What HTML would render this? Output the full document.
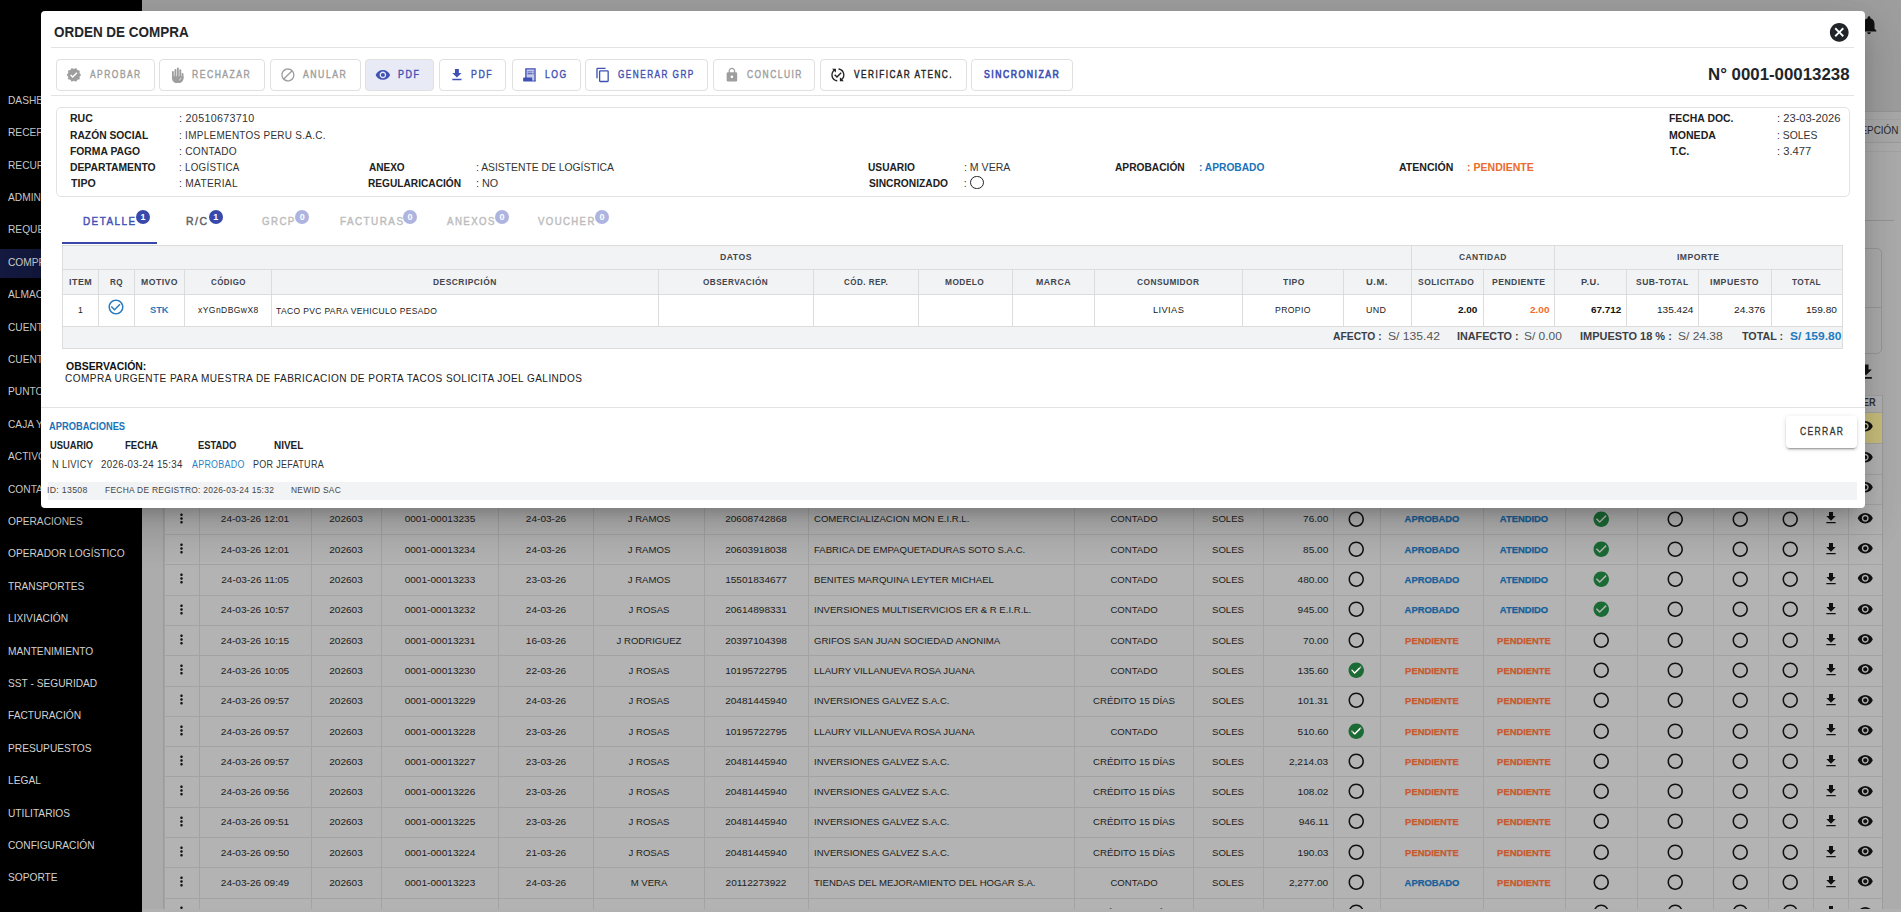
<!DOCTYPE html>
<html><head><meta charset="utf-8"><title>Orden de compra</title>
<style>
html,body{margin:0;padding:0;width:1901px;height:912px;overflow:hidden;background:#000;font-family:"Liberation Sans", sans-serif;}
.t{position:absolute;white-space:nowrap;line-height:1;font-family:"Liberation Sans", sans-serif;}
.r{position:absolute;}
</style></head><body>
<div class="r" style="left:0px;top:0px;width:142px;height:912px;background:#000;"></div><div class="r" style="left:142px;top:0px;width:1759px;height:912px;background:#acacac;"></div><div class="r" style="left:142px;top:0px;width:1759px;height:111px;background:#9e9e9e;"></div><div class="r" style="left:142px;top:111px;width:1759px;height:32px;background:#a9a9a9;border-top:1px solid #969696;border-bottom:1px solid #9c9c9c;box-sizing:border-box;"></div><div class="r" style="left:142px;top:119px;width:1759px;height:1px;background:#a2a2a2;"></div><div class="r" style="left:142px;top:151px;width:1759px;height:1px;background:#a3a3a3;"></div><div class="t" style="right:3.00px;top:124.69px;font-size:11px;font-weight:400;color:#2a2a2a;transform:scaleX(0.9000);transform-origin:right 50%;">RECEPCIÓN</div><svg class="r" style="left:1858.00px;top:14.00px;width:22px;height:22px;" viewBox="0 0 24 24"><path fill="#111" d="M12 22c1.1 0 2-.9 2-2h-4c0 1.1.89 2 2 2zm6-6v-5c0-3.07-1.64-5.64-4.5-6.32V4c0-.83-.67-1.5-1.5-1.5s-1.5.67-1.5 1.5v.68C7.63 5.36 6 7.92 6 11v5l-2 2v1h16v-1l-2-2z"/></svg><div class="r" style="left:1640px;top:220px;width:254px;height:1px;background:#959595;"></div><div class="r" style="left:1600px;top:248px;width:282px;height:106px;background:#acacac;border:1px solid #989898;border-radius:5px;box-sizing:border-box;"></div><div class="r" style="left:1600px;top:307px;width:282px;height:1px;background:#989898;"></div><svg class="r" style="left:1856.00px;top:362.00px;width:20px;height:20px;" viewBox="0 0 24 24"><path fill="#111" d="M19 9h-4V3H9v6H5l7 7 7-7zM5 18v2h14v-2H5z"/></svg><div class="r" style="left:0px;top:249px;width:142px;height:29px;background:#141a40;"></div><div class="t" style="left:8.00px;top:94.71px;font-size:10.5px;font-weight:400;color:#d2d2d2;transform:scaleX(0.9700);transform-origin:left 50%;">DASHBOARD</div><div class="t" style="left:8.00px;top:127.11px;font-size:10.5px;font-weight:400;color:#d2d2d2;transform:scaleX(0.9700);transform-origin:left 50%;">RECEPCIÓN</div><div class="t" style="left:8.00px;top:159.51px;font-size:10.5px;font-weight:400;color:#d2d2d2;transform:scaleX(0.9700);transform-origin:left 50%;">RECURSOS HUMANOS</div><div class="t" style="left:8.00px;top:191.91px;font-size:10.5px;font-weight:400;color:#d2d2d2;transform:scaleX(0.9700);transform-origin:left 50%;">ADMINISTRACIÓN</div><div class="t" style="left:8.00px;top:224.31px;font-size:10.5px;font-weight:400;color:#d2d2d2;transform:scaleX(0.9700);transform-origin:left 50%;">REQUERIMIENTOS</div><div class="t" style="left:8.00px;top:256.71px;font-size:10.5px;font-weight:400;color:#d2d2d2;transform:scaleX(0.9700);transform-origin:left 50%;">COMPRAS</div><div class="t" style="left:8.00px;top:289.11px;font-size:10.5px;font-weight:400;color:#d2d2d2;transform:scaleX(0.9700);transform-origin:left 50%;">ALMACÉN</div><div class="t" style="left:8.00px;top:321.51px;font-size:10.5px;font-weight:400;color:#d2d2d2;transform:scaleX(0.9700);transform-origin:left 50%;">CUENTAS POR PAGAR</div><div class="t" style="left:8.00px;top:353.91px;font-size:10.5px;font-weight:400;color:#d2d2d2;transform:scaleX(0.9700);transform-origin:left 50%;">CUENTAS POR COBRAR</div><div class="t" style="left:8.00px;top:386.31px;font-size:10.5px;font-weight:400;color:#d2d2d2;transform:scaleX(0.9700);transform-origin:left 50%;">PUNTO DE VENTA</div><div class="t" style="left:8.00px;top:418.71px;font-size:10.5px;font-weight:400;color:#d2d2d2;transform:scaleX(0.9700);transform-origin:left 50%;">CAJA Y BANCOS</div><div class="t" style="left:8.00px;top:451.11px;font-size:10.5px;font-weight:400;color:#d2d2d2;transform:scaleX(0.9700);transform-origin:left 50%;">ACTIVOS</div><div class="t" style="left:8.00px;top:483.51px;font-size:10.5px;font-weight:400;color:#d2d2d2;transform:scaleX(0.9700);transform-origin:left 50%;">CONTABILIDAD</div><div class="t" style="left:8.00px;top:515.91px;font-size:10.5px;font-weight:400;color:#d2d2d2;transform:scaleX(0.9700);transform-origin:left 50%;">OPERACIONES</div><div class="t" style="left:8.00px;top:548.31px;font-size:10.5px;font-weight:400;color:#d2d2d2;transform:scaleX(0.9700);transform-origin:left 50%;">OPERADOR LOGÍSTICO</div><div class="t" style="left:8.00px;top:580.71px;font-size:10.5px;font-weight:400;color:#d2d2d2;transform:scaleX(0.9700);transform-origin:left 50%;">TRANSPORTES</div><div class="t" style="left:8.00px;top:613.11px;font-size:10.5px;font-weight:400;color:#d2d2d2;transform:scaleX(0.9700);transform-origin:left 50%;">LIXIVIACIÓN</div><div class="t" style="left:8.00px;top:645.51px;font-size:10.5px;font-weight:400;color:#d2d2d2;transform:scaleX(0.9700);transform-origin:left 50%;">MANTENIMIENTO</div><div class="t" style="left:8.00px;top:677.91px;font-size:10.5px;font-weight:400;color:#d2d2d2;transform:scaleX(0.9700);transform-origin:left 50%;">SST - SEGURIDAD</div><div class="t" style="left:8.00px;top:710.31px;font-size:10.5px;font-weight:400;color:#d2d2d2;transform:scaleX(0.9700);transform-origin:left 50%;">FACTURACIÓN</div><div class="t" style="left:8.00px;top:742.71px;font-size:10.5px;font-weight:400;color:#d2d2d2;transform:scaleX(0.9700);transform-origin:left 50%;">PRESUPUESTOS</div><div class="t" style="left:8.00px;top:775.11px;font-size:10.5px;font-weight:400;color:#d2d2d2;transform:scaleX(0.9700);transform-origin:left 50%;">LEGAL</div><div class="t" style="left:8.00px;top:807.51px;font-size:10.5px;font-weight:400;color:#d2d2d2;transform:scaleX(0.9700);transform-origin:left 50%;">UTILITARIOS</div><div class="t" style="left:8.00px;top:839.91px;font-size:10.5px;font-weight:400;color:#d2d2d2;transform:scaleX(0.9700);transform-origin:left 50%;">CONFIGURACIÓN</div><div class="t" style="left:8.00px;top:872.31px;font-size:10.5px;font-weight:400;color:#d2d2d2;transform:scaleX(0.9700);transform-origin:left 50%;">SOPORTE</div><div class="r" style="left:164px;top:395px;width:1718px;height:514px;background:#b3b3b3;"></div><div class="r" style="left:164px;top:395px;width:1718px;height:17px;background:#b2b2b2;"></div><div class="r" style="left:164px;top:412px;width:1718px;height:31px;background:#c9bf7d;"></div><div class="r" style="left:164px;top:395.00px;width:1718px;height:1px;background:#a3a3a3"></div><div class="r" style="left:164px;top:412.00px;width:1718px;height:1px;background:#a3a3a3"></div><div class="r" style="left:164px;top:443.29px;width:1718px;height:1px;background:#a3a3a3"></div><div class="r" style="left:164px;top:473.58px;width:1718px;height:1px;background:#a3a3a3"></div><div class="r" style="left:164px;top:503.87px;width:1718px;height:1px;background:#a3a3a3"></div><div class="r" style="left:164px;top:534.16px;width:1718px;height:1px;background:#a3a3a3"></div><div class="r" style="left:164px;top:564.45px;width:1718px;height:1px;background:#a3a3a3"></div><div class="r" style="left:164px;top:594.74px;width:1718px;height:1px;background:#a3a3a3"></div><div class="r" style="left:164px;top:625.03px;width:1718px;height:1px;background:#a3a3a3"></div><div class="r" style="left:164px;top:655.32px;width:1718px;height:1px;background:#a3a3a3"></div><div class="r" style="left:164px;top:685.61px;width:1718px;height:1px;background:#a3a3a3"></div><div class="r" style="left:164px;top:715.90px;width:1718px;height:1px;background:#a3a3a3"></div><div class="r" style="left:164px;top:746.19px;width:1718px;height:1px;background:#a3a3a3"></div><div class="r" style="left:164px;top:776.48px;width:1718px;height:1px;background:#a3a3a3"></div><div class="r" style="left:164px;top:806.77px;width:1718px;height:1px;background:#a3a3a3"></div><div class="r" style="left:164px;top:837.06px;width:1718px;height:1px;background:#a3a3a3"></div><div class="r" style="left:164px;top:867.35px;width:1718px;height:1px;background:#a3a3a3"></div><div class="r" style="left:164px;top:897.64px;width:1718px;height:1px;background:#a3a3a3"></div><div class="r" style="left:164px;top:395px;width:1px;height:514px;background:#a3a3a3;"></div><div class="r" style="left:199px;top:395px;width:1px;height:514px;background:#a3a3a3;"></div><div class="r" style="left:311px;top:395px;width:1px;height:514px;background:#a3a3a3;"></div><div class="r" style="left:381px;top:395px;width:1px;height:514px;background:#a3a3a3;"></div><div class="r" style="left:498px;top:395px;width:1px;height:514px;background:#a3a3a3;"></div><div class="r" style="left:593px;top:395px;width:1px;height:514px;background:#a3a3a3;"></div><div class="r" style="left:704px;top:395px;width:1px;height:514px;background:#a3a3a3;"></div><div class="r" style="left:808px;top:395px;width:1px;height:514px;background:#a3a3a3;"></div><div class="r" style="left:1074px;top:395px;width:1px;height:514px;background:#a3a3a3;"></div><div class="r" style="left:1193px;top:395px;width:1px;height:514px;background:#a3a3a3;"></div><div class="r" style="left:1263px;top:395px;width:1px;height:514px;background:#a3a3a3;"></div><div class="r" style="left:1333px;top:395px;width:1px;height:514px;background:#a3a3a3;"></div><div class="r" style="left:1380px;top:395px;width:1px;height:514px;background:#a3a3a3;"></div><div class="r" style="left:1483px;top:395px;width:1px;height:514px;background:#a3a3a3;"></div><div class="r" style="left:1565px;top:395px;width:1px;height:514px;background:#a3a3a3;"></div><div class="r" style="left:1637px;top:395px;width:1px;height:514px;background:#a3a3a3;"></div><div class="r" style="left:1713px;top:395px;width:1px;height:514px;background:#a3a3a3;"></div><div class="r" style="left:1768px;top:395px;width:1px;height:514px;background:#a3a3a3;"></div><div class="r" style="left:1813px;top:395px;width:1px;height:514px;background:#a3a3a3;"></div><div class="r" style="left:1848px;top:395px;width:1px;height:514px;background:#a3a3a3;"></div><div class="r" style="left:1882px;top:395px;width:1px;height:514px;background:#a3a3a3;"></div><div class="r" style="left:163px;top:395px;width:1px;height:514px;background:#9c9c9c;"></div><div class="r" style="left:1882px;top:395px;width:1px;height:514px;background:#9c9c9c;"></div><div class="t" style="right:25.00px;top:398.34px;font-size:10px;font-weight:700;color:#333;transform:scaleX(0.9200);transform-origin:right 50%;">VER</div><svg class="r" style="left:1857.25px;top:418.35px;width:16.5px;height:16.5px;" viewBox="0 0 24 24"><path fill="#111" d="M12 4.5C7 4.5 2.73 7.61 1 12c1.73 4.39 6 7.5 11 7.5s9.27-3.11 11-7.5c-1.73-4.39-6-7.5-11-7.5zM12 17c-2.76 0-5-2.24-5-5s2.24-5 5-5 5 2.24 5 5-2.24 5-5 5zm0-8c-1.66 0-3 1.34-3 3s1.34 3 3 3 3-1.34 3-3-1.34-3-3-3z"/></svg><svg class="r" style="left:1857.25px;top:448.64px;width:16.5px;height:16.5px;" viewBox="0 0 24 24"><path fill="#111" d="M12 4.5C7 4.5 2.73 7.61 1 12c1.73 4.39 6 7.5 11 7.5s9.27-3.11 11-7.5c-1.73-4.39-6-7.5-11-7.5zM12 17c-2.76 0-5-2.24-5-5s2.24-5 5-5 5 2.24 5 5-2.24 5-5 5zm0-8c-1.66 0-3 1.34-3 3s1.34 3 3 3 3-1.34 3-3-1.34-3-3-3z"/></svg><svg class="r" style="left:1857.25px;top:478.93px;width:16.5px;height:16.5px;" viewBox="0 0 24 24"><path fill="#111" d="M12 4.5C7 4.5 2.73 7.61 1 12c1.73 4.39 6 7.5 11 7.5s9.27-3.11 11-7.5c-1.73-4.39-6-7.5-11-7.5zM12 17c-2.76 0-5-2.24-5-5s2.24-5 5-5 5 2.24 5 5-2.24 5-5 5zm0-8c-1.66 0-3 1.34-3 3s1.34 3 3 3 3-1.34 3-3-1.34-3-3-3z"/></svg><svg class="r" style="left:173.50px;top:510.64px;width:15px;height:15px;" viewBox="0 0 24 24"><path fill="#111" d="M12 8c1.1 0 2-.9 2-2s-.9-2-2-2-2 .9-2 2 .9 2 2 2zm0 2c-1.1 0-2 .9-2 2s.9 2 2 2 2-.9 2-2-.9-2-2-2zm0 6c-1.1 0-2 .9-2 2s.9 2 2 2 2-.9 2-2-.9-2-2-2z"/></svg><div class="t" style="left:255.00px;top:515.27px;font-size:9.3px;font-weight:400;color:#1c1c1c;transform:translateX(-50%) scaleX(1.0850);transform-origin:center 50%;">24-03-26 12:01</div><div class="t" style="left:346.00px;top:515.27px;font-size:9.3px;font-weight:400;color:#1c1c1c;transform:translateX(-50%) scaleX(1.0850);transform-origin:center 50%;">202603</div><div class="t" style="left:439.50px;top:515.27px;font-size:9.3px;font-weight:400;color:#1c1c1c;transform:translateX(-50%) scaleX(1.0850);transform-origin:center 50%;">0001-00013235</div><div class="t" style="left:545.50px;top:515.27px;font-size:9.3px;font-weight:400;color:#1c1c1c;transform:translateX(-50%) scaleX(1.0850);transform-origin:center 50%;">24-03-26</div><div class="t" style="left:648.50px;top:515.27px;font-size:9.3px;font-weight:400;color:#1c1c1c;transform:translateX(-50%) scaleX(1.0300);transform-origin:center 50%;">J RAMOS</div><div class="t" style="left:756.00px;top:515.27px;font-size:9.3px;font-weight:400;color:#1c1c1c;transform:translateX(-50%) scaleX(1.0850);transform-origin:center 50%;">20608742868</div><div class="t" style="left:813.70px;top:515.27px;font-size:9.3px;font-weight:400;color:#1c1c1c;transform:scaleX(1.0300);transform-origin:left 50%;">COMERCIALIZACION MON E.I.R.L.</div><div class="t" style="left:1133.50px;top:515.27px;font-size:9.3px;font-weight:400;color:#1c1c1c;transform:translateX(-50%) scaleX(1.0300);transform-origin:center 50%;">CONTADO</div><div class="t" style="left:1228.00px;top:515.27px;font-size:9.3px;font-weight:400;color:#1c1c1c;transform:translateX(-50%) scaleX(1.0300);transform-origin:center 50%;">SOLES</div><div class="t" style="right:572.50px;top:515.27px;font-size:9.3px;font-weight:400;color:#1c1c1c;transform:scaleX(1.0850);transform-origin:right 50%;">76.00</div><svg class="r" style="left:1347.25px;top:509.60px;width:18.5px;height:18.5px;" viewBox="0 0 24 24"><path fill="#111" d="M12 2C6.48 2 2 6.48 2 12s4.48 10 10 10 10-4.48 10-10S17.52 2 12 2zm0 18c-4.42 0-8-3.58-8-8s3.58-8 8-8 8 3.58 8 8-3.58 8-8 8z"/></svg><div class="t" style="left:1431.50px;top:515.27px;font-size:9.3px;font-weight:700;color:#17609a;transform:translateX(-50%) scaleX(1.0100);transform-origin:center 50%;-webkit-text-stroke:0.25px #17609a;">APROBADO</div><div class="t" style="left:1524.00px;top:515.27px;font-size:9.3px;font-weight:700;color:#17609a;transform:translateX(-50%) scaleX(1.0100);transform-origin:center 50%;-webkit-text-stroke:0.25px #17609a;">ATENDIDO</div><svg class="r" style="left:1591.75px;top:509.60px;width:18.5px;height:18.5px;" viewBox="0 0 24 24"><path fill="#1b6b35" d="M12 2C6.48 2 2 6.48 2 12s4.48 10 10 10 10-4.48 10-10S17.52 2 12 2zm-2 15l-5-5 1.41-1.41L10 14.17l7.59-7.59L19 8l-9 9z"/></svg><svg class="r" style="left:1665.75px;top:509.60px;width:18.5px;height:18.5px;" viewBox="0 0 24 24"><path fill="#111" d="M12 2C6.48 2 2 6.48 2 12s4.48 10 10 10 10-4.48 10-10S17.52 2 12 2zm0 18c-4.42 0-8-3.58-8-8s3.58-8 8-8 8 3.58 8 8-3.58 8-8 8z"/></svg><svg class="r" style="left:1731.25px;top:509.60px;width:18.5px;height:18.5px;" viewBox="0 0 24 24"><path fill="#111" d="M12 2C6.48 2 2 6.48 2 12s4.48 10 10 10 10-4.48 10-10S17.52 2 12 2zm0 18c-4.42 0-8-3.58-8-8s3.58-8 8-8 8 3.58 8 8-3.58 8-8 8z"/></svg><svg class="r" style="left:1781.25px;top:509.60px;width:18.5px;height:18.5px;" viewBox="0 0 24 24"><path fill="#111" d="M12 2C6.48 2 2 6.48 2 12s4.48 10 10 10 10-4.48 10-10S17.52 2 12 2zm0 18c-4.42 0-8-3.58-8-8s3.58-8 8-8 8 3.58 8 8-3.58 8-8 8z"/></svg><svg class="r" style="left:1822.50px;top:510.35px;width:16px;height:16px;" viewBox="0 0 24 24"><path fill="#111" d="M19 9h-4V3H9v6H5l7 7 7-7zM5 18v2h14v-2H5z"/></svg><svg class="r" style="left:1856.75px;top:509.89px;width:16.5px;height:16.5px;" viewBox="0 0 24 24"><path fill="#111" d="M12 4.5C7 4.5 2.73 7.61 1 12c1.73 4.39 6 7.5 11 7.5s9.27-3.11 11-7.5c-1.73-4.39-6-7.5-11-7.5zM12 17c-2.76 0-5-2.24-5-5s2.24-5 5-5 5 2.24 5 5-2.24 5-5 5zm0-8c-1.66 0-3 1.34-3 3s1.34 3 3 3 3-1.34 3-3-1.34-3-3-3z"/></svg><svg class="r" style="left:173.50px;top:540.93px;width:15px;height:15px;" viewBox="0 0 24 24"><path fill="#111" d="M12 8c1.1 0 2-.9 2-2s-.9-2-2-2-2 .9-2 2 .9 2 2 2zm0 2c-1.1 0-2 .9-2 2s.9 2 2 2 2-.9 2-2-.9-2-2-2zm0 6c-1.1 0-2 .9-2 2s.9 2 2 2 2-.9 2-2-.9-2-2-2z"/></svg><div class="t" style="left:255.00px;top:545.86px;font-size:9.3px;font-weight:400;color:#1c1c1c;transform:translateX(-50%) scaleX(1.0850);transform-origin:center 50%;">24-03-26 12:01</div><div class="t" style="left:346.00px;top:545.86px;font-size:9.3px;font-weight:400;color:#1c1c1c;transform:translateX(-50%) scaleX(1.0850);transform-origin:center 50%;">202603</div><div class="t" style="left:439.50px;top:545.86px;font-size:9.3px;font-weight:400;color:#1c1c1c;transform:translateX(-50%) scaleX(1.0850);transform-origin:center 50%;">0001-00013234</div><div class="t" style="left:545.50px;top:545.86px;font-size:9.3px;font-weight:400;color:#1c1c1c;transform:translateX(-50%) scaleX(1.0850);transform-origin:center 50%;">24-03-26</div><div class="t" style="left:648.50px;top:545.86px;font-size:9.3px;font-weight:400;color:#1c1c1c;transform:translateX(-50%) scaleX(1.0300);transform-origin:center 50%;">J RAMOS</div><div class="t" style="left:756.00px;top:545.86px;font-size:9.3px;font-weight:400;color:#1c1c1c;transform:translateX(-50%) scaleX(1.0850);transform-origin:center 50%;">20603918038</div><div class="t" style="left:813.70px;top:545.86px;font-size:9.3px;font-weight:400;color:#1c1c1c;transform:scaleX(1.0300);transform-origin:left 50%;">FABRICA DE EMPAQUETADURAS SOTO S.A.C.</div><div class="t" style="left:1133.50px;top:545.86px;font-size:9.3px;font-weight:400;color:#1c1c1c;transform:translateX(-50%) scaleX(1.0300);transform-origin:center 50%;">CONTADO</div><div class="t" style="left:1228.00px;top:545.86px;font-size:9.3px;font-weight:400;color:#1c1c1c;transform:translateX(-50%) scaleX(1.0300);transform-origin:center 50%;">SOLES</div><div class="t" style="right:572.50px;top:545.86px;font-size:9.3px;font-weight:400;color:#1c1c1c;transform:scaleX(1.0850);transform-origin:right 50%;">85.00</div><svg class="r" style="left:1347.25px;top:539.88px;width:18.5px;height:18.5px;" viewBox="0 0 24 24"><path fill="#111" d="M12 2C6.48 2 2 6.48 2 12s4.48 10 10 10 10-4.48 10-10S17.52 2 12 2zm0 18c-4.42 0-8-3.58-8-8s3.58-8 8-8 8 3.58 8 8-3.58 8-8 8z"/></svg><div class="t" style="left:1431.50px;top:545.86px;font-size:9.3px;font-weight:700;color:#17609a;transform:translateX(-50%) scaleX(1.0100);transform-origin:center 50%;-webkit-text-stroke:0.25px #17609a;">APROBADO</div><div class="t" style="left:1524.00px;top:545.86px;font-size:9.3px;font-weight:700;color:#17609a;transform:translateX(-50%) scaleX(1.0100);transform-origin:center 50%;-webkit-text-stroke:0.25px #17609a;">ATENDIDO</div><svg class="r" style="left:1591.75px;top:539.88px;width:18.5px;height:18.5px;" viewBox="0 0 24 24"><path fill="#1b6b35" d="M12 2C6.48 2 2 6.48 2 12s4.48 10 10 10 10-4.48 10-10S17.52 2 12 2zm-2 15l-5-5 1.41-1.41L10 14.17l7.59-7.59L19 8l-9 9z"/></svg><svg class="r" style="left:1665.75px;top:539.88px;width:18.5px;height:18.5px;" viewBox="0 0 24 24"><path fill="#111" d="M12 2C6.48 2 2 6.48 2 12s4.48 10 10 10 10-4.48 10-10S17.52 2 12 2zm0 18c-4.42 0-8-3.58-8-8s3.58-8 8-8 8 3.58 8 8-3.58 8-8 8z"/></svg><svg class="r" style="left:1731.25px;top:539.88px;width:18.5px;height:18.5px;" viewBox="0 0 24 24"><path fill="#111" d="M12 2C6.48 2 2 6.48 2 12s4.48 10 10 10 10-4.48 10-10S17.52 2 12 2zm0 18c-4.42 0-8-3.58-8-8s3.58-8 8-8 8 3.58 8 8-3.58 8-8 8z"/></svg><svg class="r" style="left:1781.25px;top:539.88px;width:18.5px;height:18.5px;" viewBox="0 0 24 24"><path fill="#111" d="M12 2C6.48 2 2 6.48 2 12s4.48 10 10 10 10-4.48 10-10S17.52 2 12 2zm0 18c-4.42 0-8-3.58-8-8s3.58-8 8-8 8 3.58 8 8-3.58 8-8 8z"/></svg><svg class="r" style="left:1822.50px;top:540.63px;width:16px;height:16px;" viewBox="0 0 24 24"><path fill="#111" d="M19 9h-4V3H9v6H5l7 7 7-7zM5 18v2h14v-2H5z"/></svg><svg class="r" style="left:1856.75px;top:540.18px;width:16.5px;height:16.5px;" viewBox="0 0 24 24"><path fill="#111" d="M12 4.5C7 4.5 2.73 7.61 1 12c1.73 4.39 6 7.5 11 7.5s9.27-3.11 11-7.5c-1.73-4.39-6-7.5-11-7.5zM12 17c-2.76 0-5-2.24-5-5s2.24-5 5-5 5 2.24 5 5-2.24 5-5 5zm0-8c-1.66 0-3 1.34-3 3s1.34 3 3 3 3-1.34 3-3-1.34-3-3-3z"/></svg><svg class="r" style="left:173.50px;top:571.22px;width:15px;height:15px;" viewBox="0 0 24 24"><path fill="#111" d="M12 8c1.1 0 2-.9 2-2s-.9-2-2-2-2 .9-2 2 .9 2 2 2zm0 2c-1.1 0-2 .9-2 2s.9 2 2 2 2-.9 2-2-.9-2-2-2zm0 6c-1.1 0-2 .9-2 2s.9 2 2 2 2-.9 2-2-.9-2-2-2z"/></svg><div class="t" style="left:255.00px;top:576.15px;font-size:9.3px;font-weight:400;color:#1c1c1c;transform:translateX(-50%) scaleX(1.0850);transform-origin:center 50%;">24-03-26 11:05</div><div class="t" style="left:346.00px;top:576.15px;font-size:9.3px;font-weight:400;color:#1c1c1c;transform:translateX(-50%) scaleX(1.0850);transform-origin:center 50%;">202603</div><div class="t" style="left:439.50px;top:576.15px;font-size:9.3px;font-weight:400;color:#1c1c1c;transform:translateX(-50%) scaleX(1.0850);transform-origin:center 50%;">0001-00013233</div><div class="t" style="left:545.50px;top:576.15px;font-size:9.3px;font-weight:400;color:#1c1c1c;transform:translateX(-50%) scaleX(1.0850);transform-origin:center 50%;">23-03-26</div><div class="t" style="left:648.50px;top:576.15px;font-size:9.3px;font-weight:400;color:#1c1c1c;transform:translateX(-50%) scaleX(1.0300);transform-origin:center 50%;">J RAMOS</div><div class="t" style="left:756.00px;top:576.15px;font-size:9.3px;font-weight:400;color:#1c1c1c;transform:translateX(-50%) scaleX(1.0850);transform-origin:center 50%;">15501834677</div><div class="t" style="left:813.70px;top:576.15px;font-size:9.3px;font-weight:400;color:#1c1c1c;transform:scaleX(1.0300);transform-origin:left 50%;">BENITES MARQUINA LEYTER MICHAEL</div><div class="t" style="left:1133.50px;top:576.15px;font-size:9.3px;font-weight:400;color:#1c1c1c;transform:translateX(-50%) scaleX(1.0300);transform-origin:center 50%;">CONTADO</div><div class="t" style="left:1228.00px;top:576.15px;font-size:9.3px;font-weight:400;color:#1c1c1c;transform:translateX(-50%) scaleX(1.0300);transform-origin:center 50%;">SOLES</div><div class="t" style="right:572.50px;top:576.15px;font-size:9.3px;font-weight:400;color:#1c1c1c;transform:scaleX(1.0850);transform-origin:right 50%;">480.00</div><svg class="r" style="left:1347.25px;top:570.17px;width:18.5px;height:18.5px;" viewBox="0 0 24 24"><path fill="#111" d="M12 2C6.48 2 2 6.48 2 12s4.48 10 10 10 10-4.48 10-10S17.52 2 12 2zm0 18c-4.42 0-8-3.58-8-8s3.58-8 8-8 8 3.58 8 8-3.58 8-8 8z"/></svg><div class="t" style="left:1431.50px;top:576.15px;font-size:9.3px;font-weight:700;color:#17609a;transform:translateX(-50%) scaleX(1.0100);transform-origin:center 50%;-webkit-text-stroke:0.25px #17609a;">APROBADO</div><div class="t" style="left:1524.00px;top:576.15px;font-size:9.3px;font-weight:700;color:#17609a;transform:translateX(-50%) scaleX(1.0100);transform-origin:center 50%;-webkit-text-stroke:0.25px #17609a;">ATENDIDO</div><svg class="r" style="left:1591.75px;top:570.17px;width:18.5px;height:18.5px;" viewBox="0 0 24 24"><path fill="#1b6b35" d="M12 2C6.48 2 2 6.48 2 12s4.48 10 10 10 10-4.48 10-10S17.52 2 12 2zm-2 15l-5-5 1.41-1.41L10 14.17l7.59-7.59L19 8l-9 9z"/></svg><svg class="r" style="left:1665.75px;top:570.17px;width:18.5px;height:18.5px;" viewBox="0 0 24 24"><path fill="#111" d="M12 2C6.48 2 2 6.48 2 12s4.48 10 10 10 10-4.48 10-10S17.52 2 12 2zm0 18c-4.42 0-8-3.58-8-8s3.58-8 8-8 8 3.58 8 8-3.58 8-8 8z"/></svg><svg class="r" style="left:1731.25px;top:570.17px;width:18.5px;height:18.5px;" viewBox="0 0 24 24"><path fill="#111" d="M12 2C6.48 2 2 6.48 2 12s4.48 10 10 10 10-4.48 10-10S17.52 2 12 2zm0 18c-4.42 0-8-3.58-8-8s3.58-8 8-8 8 3.58 8 8-3.58 8-8 8z"/></svg><svg class="r" style="left:1781.25px;top:570.17px;width:18.5px;height:18.5px;" viewBox="0 0 24 24"><path fill="#111" d="M12 2C6.48 2 2 6.48 2 12s4.48 10 10 10 10-4.48 10-10S17.52 2 12 2zm0 18c-4.42 0-8-3.58-8-8s3.58-8 8-8 8 3.58 8 8-3.58 8-8 8z"/></svg><svg class="r" style="left:1822.50px;top:570.92px;width:16px;height:16px;" viewBox="0 0 24 24"><path fill="#111" d="M19 9h-4V3H9v6H5l7 7 7-7zM5 18v2h14v-2H5z"/></svg><svg class="r" style="left:1856.75px;top:570.47px;width:16.5px;height:16.5px;" viewBox="0 0 24 24"><path fill="#111" d="M12 4.5C7 4.5 2.73 7.61 1 12c1.73 4.39 6 7.5 11 7.5s9.27-3.11 11-7.5c-1.73-4.39-6-7.5-11-7.5zM12 17c-2.76 0-5-2.24-5-5s2.24-5 5-5 5 2.24 5 5-2.24 5-5 5zm0-8c-1.66 0-3 1.34-3 3s1.34 3 3 3 3-1.34 3-3-1.34-3-3-3z"/></svg><svg class="r" style="left:173.50px;top:601.51px;width:15px;height:15px;" viewBox="0 0 24 24"><path fill="#111" d="M12 8c1.1 0 2-.9 2-2s-.9-2-2-2-2 .9-2 2 .9 2 2 2zm0 2c-1.1 0-2 .9-2 2s.9 2 2 2 2-.9 2-2-.9-2-2-2zm0 6c-1.1 0-2 .9-2 2s.9 2 2 2 2-.9 2-2-.9-2-2-2z"/></svg><div class="t" style="left:255.00px;top:606.44px;font-size:9.3px;font-weight:400;color:#1c1c1c;transform:translateX(-50%) scaleX(1.0850);transform-origin:center 50%;">24-03-26 10:57</div><div class="t" style="left:346.00px;top:606.44px;font-size:9.3px;font-weight:400;color:#1c1c1c;transform:translateX(-50%) scaleX(1.0850);transform-origin:center 50%;">202603</div><div class="t" style="left:439.50px;top:606.44px;font-size:9.3px;font-weight:400;color:#1c1c1c;transform:translateX(-50%) scaleX(1.0850);transform-origin:center 50%;">0001-00013232</div><div class="t" style="left:545.50px;top:606.44px;font-size:9.3px;font-weight:400;color:#1c1c1c;transform:translateX(-50%) scaleX(1.0850);transform-origin:center 50%;">24-03-26</div><div class="t" style="left:648.50px;top:606.44px;font-size:9.3px;font-weight:400;color:#1c1c1c;transform:translateX(-50%) scaleX(1.0300);transform-origin:center 50%;">J ROSAS</div><div class="t" style="left:756.00px;top:606.44px;font-size:9.3px;font-weight:400;color:#1c1c1c;transform:translateX(-50%) scaleX(1.0850);transform-origin:center 50%;">20614898331</div><div class="t" style="left:813.70px;top:606.44px;font-size:9.3px;font-weight:400;color:#1c1c1c;transform:scaleX(1.0300);transform-origin:left 50%;">INVERSIONES MULTISERVICIOS ER &amp; R E.I.R.L.</div><div class="t" style="left:1133.50px;top:606.44px;font-size:9.3px;font-weight:400;color:#1c1c1c;transform:translateX(-50%) scaleX(1.0300);transform-origin:center 50%;">CONTADO</div><div class="t" style="left:1228.00px;top:606.44px;font-size:9.3px;font-weight:400;color:#1c1c1c;transform:translateX(-50%) scaleX(1.0300);transform-origin:center 50%;">SOLES</div><div class="t" style="right:572.50px;top:606.44px;font-size:9.3px;font-weight:400;color:#1c1c1c;transform:scaleX(1.0850);transform-origin:right 50%;">945.00</div><svg class="r" style="left:1347.25px;top:600.46px;width:18.5px;height:18.5px;" viewBox="0 0 24 24"><path fill="#111" d="M12 2C6.48 2 2 6.48 2 12s4.48 10 10 10 10-4.48 10-10S17.52 2 12 2zm0 18c-4.42 0-8-3.58-8-8s3.58-8 8-8 8 3.58 8 8-3.58 8-8 8z"/></svg><div class="t" style="left:1431.50px;top:606.44px;font-size:9.3px;font-weight:700;color:#17609a;transform:translateX(-50%) scaleX(1.0100);transform-origin:center 50%;-webkit-text-stroke:0.25px #17609a;">APROBADO</div><div class="t" style="left:1524.00px;top:606.44px;font-size:9.3px;font-weight:700;color:#17609a;transform:translateX(-50%) scaleX(1.0100);transform-origin:center 50%;-webkit-text-stroke:0.25px #17609a;">ATENDIDO</div><svg class="r" style="left:1591.75px;top:600.46px;width:18.5px;height:18.5px;" viewBox="0 0 24 24"><path fill="#1b6b35" d="M12 2C6.48 2 2 6.48 2 12s4.48 10 10 10 10-4.48 10-10S17.52 2 12 2zm-2 15l-5-5 1.41-1.41L10 14.17l7.59-7.59L19 8l-9 9z"/></svg><svg class="r" style="left:1665.75px;top:600.46px;width:18.5px;height:18.5px;" viewBox="0 0 24 24"><path fill="#111" d="M12 2C6.48 2 2 6.48 2 12s4.48 10 10 10 10-4.48 10-10S17.52 2 12 2zm0 18c-4.42 0-8-3.58-8-8s3.58-8 8-8 8 3.58 8 8-3.58 8-8 8z"/></svg><svg class="r" style="left:1731.25px;top:600.46px;width:18.5px;height:18.5px;" viewBox="0 0 24 24"><path fill="#111" d="M12 2C6.48 2 2 6.48 2 12s4.48 10 10 10 10-4.48 10-10S17.52 2 12 2zm0 18c-4.42 0-8-3.58-8-8s3.58-8 8-8 8 3.58 8 8-3.58 8-8 8z"/></svg><svg class="r" style="left:1781.25px;top:600.46px;width:18.5px;height:18.5px;" viewBox="0 0 24 24"><path fill="#111" d="M12 2C6.48 2 2 6.48 2 12s4.48 10 10 10 10-4.48 10-10S17.52 2 12 2zm0 18c-4.42 0-8-3.58-8-8s3.58-8 8-8 8 3.58 8 8-3.58 8-8 8z"/></svg><svg class="r" style="left:1822.50px;top:601.21px;width:16px;height:16px;" viewBox="0 0 24 24"><path fill="#111" d="M19 9h-4V3H9v6H5l7 7 7-7zM5 18v2h14v-2H5z"/></svg><svg class="r" style="left:1856.75px;top:600.76px;width:16.5px;height:16.5px;" viewBox="0 0 24 24"><path fill="#111" d="M12 4.5C7 4.5 2.73 7.61 1 12c1.73 4.39 6 7.5 11 7.5s9.27-3.11 11-7.5c-1.73-4.39-6-7.5-11-7.5zM12 17c-2.76 0-5-2.24-5-5s2.24-5 5-5 5 2.24 5 5-2.24 5-5 5zm0-8c-1.66 0-3 1.34-3 3s1.34 3 3 3 3-1.34 3-3-1.34-3-3-3z"/></svg><svg class="r" style="left:173.50px;top:631.80px;width:15px;height:15px;" viewBox="0 0 24 24"><path fill="#111" d="M12 8c1.1 0 2-.9 2-2s-.9-2-2-2-2 .9-2 2 .9 2 2 2zm0 2c-1.1 0-2 .9-2 2s.9 2 2 2 2-.9 2-2-.9-2-2-2zm0 6c-1.1 0-2 .9-2 2s.9 2 2 2 2-.9 2-2-.9-2-2-2z"/></svg><div class="t" style="left:255.00px;top:636.73px;font-size:9.3px;font-weight:400;color:#1c1c1c;transform:translateX(-50%) scaleX(1.0850);transform-origin:center 50%;">24-03-26 10:15</div><div class="t" style="left:346.00px;top:636.73px;font-size:9.3px;font-weight:400;color:#1c1c1c;transform:translateX(-50%) scaleX(1.0850);transform-origin:center 50%;">202603</div><div class="t" style="left:439.50px;top:636.73px;font-size:9.3px;font-weight:400;color:#1c1c1c;transform:translateX(-50%) scaleX(1.0850);transform-origin:center 50%;">0001-00013231</div><div class="t" style="left:545.50px;top:636.73px;font-size:9.3px;font-weight:400;color:#1c1c1c;transform:translateX(-50%) scaleX(1.0850);transform-origin:center 50%;">16-03-26</div><div class="t" style="left:648.50px;top:636.73px;font-size:9.3px;font-weight:400;color:#1c1c1c;transform:translateX(-50%) scaleX(1.0300);transform-origin:center 50%;">J RODRIGUEZ</div><div class="t" style="left:756.00px;top:636.73px;font-size:9.3px;font-weight:400;color:#1c1c1c;transform:translateX(-50%) scaleX(1.0850);transform-origin:center 50%;">20397104398</div><div class="t" style="left:813.70px;top:636.73px;font-size:9.3px;font-weight:400;color:#1c1c1c;transform:scaleX(1.0300);transform-origin:left 50%;">GRIFOS SAN JUAN SOCIEDAD ANONIMA</div><div class="t" style="left:1133.50px;top:636.73px;font-size:9.3px;font-weight:400;color:#1c1c1c;transform:translateX(-50%) scaleX(1.0300);transform-origin:center 50%;">CONTADO</div><div class="t" style="left:1228.00px;top:636.73px;font-size:9.3px;font-weight:400;color:#1c1c1c;transform:translateX(-50%) scaleX(1.0300);transform-origin:center 50%;">SOLES</div><div class="t" style="right:572.50px;top:636.73px;font-size:9.3px;font-weight:400;color:#1c1c1c;transform:scaleX(1.0850);transform-origin:right 50%;">70.00</div><svg class="r" style="left:1347.25px;top:630.75px;width:18.5px;height:18.5px;" viewBox="0 0 24 24"><path fill="#111" d="M12 2C6.48 2 2 6.48 2 12s4.48 10 10 10 10-4.48 10-10S17.52 2 12 2zm0 18c-4.42 0-8-3.58-8-8s3.58-8 8-8 8 3.58 8 8-3.58 8-8 8z"/></svg><div class="t" style="left:1431.50px;top:636.73px;font-size:9.3px;font-weight:700;color:#c8582e;transform:translateX(-50%) scaleX(1.0100);transform-origin:center 50%;-webkit-text-stroke:0.25px #c8582e;">PENDIENTE</div><div class="t" style="left:1524.00px;top:636.73px;font-size:9.3px;font-weight:700;color:#c8582e;transform:translateX(-50%) scaleX(1.0100);transform-origin:center 50%;-webkit-text-stroke:0.25px #c8582e;">PENDIENTE</div><svg class="r" style="left:1591.75px;top:630.75px;width:18.5px;height:18.5px;" viewBox="0 0 24 24"><path fill="#111" d="M12 2C6.48 2 2 6.48 2 12s4.48 10 10 10 10-4.48 10-10S17.52 2 12 2zm0 18c-4.42 0-8-3.58-8-8s3.58-8 8-8 8 3.58 8 8-3.58 8-8 8z"/></svg><svg class="r" style="left:1665.75px;top:630.75px;width:18.5px;height:18.5px;" viewBox="0 0 24 24"><path fill="#111" d="M12 2C6.48 2 2 6.48 2 12s4.48 10 10 10 10-4.48 10-10S17.52 2 12 2zm0 18c-4.42 0-8-3.58-8-8s3.58-8 8-8 8 3.58 8 8-3.58 8-8 8z"/></svg><svg class="r" style="left:1731.25px;top:630.75px;width:18.5px;height:18.5px;" viewBox="0 0 24 24"><path fill="#111" d="M12 2C6.48 2 2 6.48 2 12s4.48 10 10 10 10-4.48 10-10S17.52 2 12 2zm0 18c-4.42 0-8-3.58-8-8s3.58-8 8-8 8 3.58 8 8-3.58 8-8 8z"/></svg><svg class="r" style="left:1781.25px;top:630.75px;width:18.5px;height:18.5px;" viewBox="0 0 24 24"><path fill="#111" d="M12 2C6.48 2 2 6.48 2 12s4.48 10 10 10 10-4.48 10-10S17.52 2 12 2zm0 18c-4.42 0-8-3.58-8-8s3.58-8 8-8 8 3.58 8 8-3.58 8-8 8z"/></svg><svg class="r" style="left:1822.50px;top:631.50px;width:16px;height:16px;" viewBox="0 0 24 24"><path fill="#111" d="M19 9h-4V3H9v6H5l7 7 7-7zM5 18v2h14v-2H5z"/></svg><svg class="r" style="left:1856.75px;top:631.05px;width:16.5px;height:16.5px;" viewBox="0 0 24 24"><path fill="#111" d="M12 4.5C7 4.5 2.73 7.61 1 12c1.73 4.39 6 7.5 11 7.5s9.27-3.11 11-7.5c-1.73-4.39-6-7.5-11-7.5zM12 17c-2.76 0-5-2.24-5-5s2.24-5 5-5 5 2.24 5 5-2.24 5-5 5zm0-8c-1.66 0-3 1.34-3 3s1.34 3 3 3 3-1.34 3-3-1.34-3-3-3z"/></svg><svg class="r" style="left:173.50px;top:662.09px;width:15px;height:15px;" viewBox="0 0 24 24"><path fill="#111" d="M12 8c1.1 0 2-.9 2-2s-.9-2-2-2-2 .9-2 2 .9 2 2 2zm0 2c-1.1 0-2 .9-2 2s.9 2 2 2 2-.9 2-2-.9-2-2-2zm0 6c-1.1 0-2 .9-2 2s.9 2 2 2 2-.9 2-2-.9-2-2-2z"/></svg><div class="t" style="left:255.00px;top:667.02px;font-size:9.3px;font-weight:400;color:#1c1c1c;transform:translateX(-50%) scaleX(1.0850);transform-origin:center 50%;">24-03-26 10:05</div><div class="t" style="left:346.00px;top:667.02px;font-size:9.3px;font-weight:400;color:#1c1c1c;transform:translateX(-50%) scaleX(1.0850);transform-origin:center 50%;">202603</div><div class="t" style="left:439.50px;top:667.02px;font-size:9.3px;font-weight:400;color:#1c1c1c;transform:translateX(-50%) scaleX(1.0850);transform-origin:center 50%;">0001-00013230</div><div class="t" style="left:545.50px;top:667.02px;font-size:9.3px;font-weight:400;color:#1c1c1c;transform:translateX(-50%) scaleX(1.0850);transform-origin:center 50%;">22-03-26</div><div class="t" style="left:648.50px;top:667.02px;font-size:9.3px;font-weight:400;color:#1c1c1c;transform:translateX(-50%) scaleX(1.0300);transform-origin:center 50%;">J ROSAS</div><div class="t" style="left:756.00px;top:667.02px;font-size:9.3px;font-weight:400;color:#1c1c1c;transform:translateX(-50%) scaleX(1.0850);transform-origin:center 50%;">10195722795</div><div class="t" style="left:813.70px;top:667.02px;font-size:9.3px;font-weight:400;color:#1c1c1c;transform:scaleX(1.0300);transform-origin:left 50%;">LLAURY VILLANUEVA ROSA JUANA</div><div class="t" style="left:1133.50px;top:667.02px;font-size:9.3px;font-weight:400;color:#1c1c1c;transform:translateX(-50%) scaleX(1.0300);transform-origin:center 50%;">CONTADO</div><div class="t" style="left:1228.00px;top:667.02px;font-size:9.3px;font-weight:400;color:#1c1c1c;transform:translateX(-50%) scaleX(1.0300);transform-origin:center 50%;">SOLES</div><div class="t" style="right:572.50px;top:667.02px;font-size:9.3px;font-weight:400;color:#1c1c1c;transform:scaleX(1.0850);transform-origin:right 50%;">135.60</div><svg class="r" style="left:1347.25px;top:661.04px;width:18.5px;height:18.5px;background:radial-gradient(circle,#fff 0,#fff 30%,transparent 31%);border-radius:50%;" viewBox="0 0 24 24"><path fill="#1b6b35" d="M12 2C6.48 2 2 6.48 2 12s4.48 10 10 10 10-4.48 10-10S17.52 2 12 2zm-2 15l-5-5 1.41-1.41L10 14.17l7.59-7.59L19 8l-9 9z"/></svg><div class="t" style="left:1431.50px;top:667.02px;font-size:9.3px;font-weight:700;color:#c8582e;transform:translateX(-50%) scaleX(1.0100);transform-origin:center 50%;-webkit-text-stroke:0.25px #c8582e;">PENDIENTE</div><div class="t" style="left:1524.00px;top:667.02px;font-size:9.3px;font-weight:700;color:#c8582e;transform:translateX(-50%) scaleX(1.0100);transform-origin:center 50%;-webkit-text-stroke:0.25px #c8582e;">PENDIENTE</div><svg class="r" style="left:1591.75px;top:661.04px;width:18.5px;height:18.5px;" viewBox="0 0 24 24"><path fill="#111" d="M12 2C6.48 2 2 6.48 2 12s4.48 10 10 10 10-4.48 10-10S17.52 2 12 2zm0 18c-4.42 0-8-3.58-8-8s3.58-8 8-8 8 3.58 8 8-3.58 8-8 8z"/></svg><svg class="r" style="left:1665.75px;top:661.04px;width:18.5px;height:18.5px;" viewBox="0 0 24 24"><path fill="#111" d="M12 2C6.48 2 2 6.48 2 12s4.48 10 10 10 10-4.48 10-10S17.52 2 12 2zm0 18c-4.42 0-8-3.58-8-8s3.58-8 8-8 8 3.58 8 8-3.58 8-8 8z"/></svg><svg class="r" style="left:1731.25px;top:661.04px;width:18.5px;height:18.5px;" viewBox="0 0 24 24"><path fill="#111" d="M12 2C6.48 2 2 6.48 2 12s4.48 10 10 10 10-4.48 10-10S17.52 2 12 2zm0 18c-4.42 0-8-3.58-8-8s3.58-8 8-8 8 3.58 8 8-3.58 8-8 8z"/></svg><svg class="r" style="left:1781.25px;top:661.04px;width:18.5px;height:18.5px;" viewBox="0 0 24 24"><path fill="#111" d="M12 2C6.48 2 2 6.48 2 12s4.48 10 10 10 10-4.48 10-10S17.52 2 12 2zm0 18c-4.42 0-8-3.58-8-8s3.58-8 8-8 8 3.58 8 8-3.58 8-8 8z"/></svg><svg class="r" style="left:1822.50px;top:661.79px;width:16px;height:16px;" viewBox="0 0 24 24"><path fill="#111" d="M19 9h-4V3H9v6H5l7 7 7-7zM5 18v2h14v-2H5z"/></svg><svg class="r" style="left:1856.75px;top:661.34px;width:16.5px;height:16.5px;" viewBox="0 0 24 24"><path fill="#111" d="M12 4.5C7 4.5 2.73 7.61 1 12c1.73 4.39 6 7.5 11 7.5s9.27-3.11 11-7.5c-1.73-4.39-6-7.5-11-7.5zM12 17c-2.76 0-5-2.24-5-5s2.24-5 5-5 5 2.24 5 5-2.24 5-5 5zm0-8c-1.66 0-3 1.34-3 3s1.34 3 3 3 3-1.34 3-3-1.34-3-3-3z"/></svg><svg class="r" style="left:173.50px;top:692.38px;width:15px;height:15px;" viewBox="0 0 24 24"><path fill="#111" d="M12 8c1.1 0 2-.9 2-2s-.9-2-2-2-2 .9-2 2 .9 2 2 2zm0 2c-1.1 0-2 .9-2 2s.9 2 2 2 2-.9 2-2-.9-2-2-2zm0 6c-1.1 0-2 .9-2 2s.9 2 2 2 2-.9 2-2-.9-2-2-2z"/></svg><div class="t" style="left:255.00px;top:697.31px;font-size:9.3px;font-weight:400;color:#1c1c1c;transform:translateX(-50%) scaleX(1.0850);transform-origin:center 50%;">24-03-26 09:57</div><div class="t" style="left:346.00px;top:697.31px;font-size:9.3px;font-weight:400;color:#1c1c1c;transform:translateX(-50%) scaleX(1.0850);transform-origin:center 50%;">202603</div><div class="t" style="left:439.50px;top:697.31px;font-size:9.3px;font-weight:400;color:#1c1c1c;transform:translateX(-50%) scaleX(1.0850);transform-origin:center 50%;">0001-00013229</div><div class="t" style="left:545.50px;top:697.31px;font-size:9.3px;font-weight:400;color:#1c1c1c;transform:translateX(-50%) scaleX(1.0850);transform-origin:center 50%;">24-03-26</div><div class="t" style="left:648.50px;top:697.31px;font-size:9.3px;font-weight:400;color:#1c1c1c;transform:translateX(-50%) scaleX(1.0300);transform-origin:center 50%;">J ROSAS</div><div class="t" style="left:756.00px;top:697.31px;font-size:9.3px;font-weight:400;color:#1c1c1c;transform:translateX(-50%) scaleX(1.0850);transform-origin:center 50%;">20481445940</div><div class="t" style="left:813.70px;top:697.31px;font-size:9.3px;font-weight:400;color:#1c1c1c;transform:scaleX(1.0300);transform-origin:left 50%;">INVERSIONES GALVEZ S.A.C.</div><div class="t" style="left:1133.50px;top:697.31px;font-size:9.3px;font-weight:400;color:#1c1c1c;transform:translateX(-50%) scaleX(1.0400);transform-origin:center 50%;">CRÉDITO 15 DÍAS</div><div class="t" style="left:1228.00px;top:697.31px;font-size:9.3px;font-weight:400;color:#1c1c1c;transform:translateX(-50%) scaleX(1.0300);transform-origin:center 50%;">SOLES</div><div class="t" style="right:572.50px;top:697.31px;font-size:9.3px;font-weight:400;color:#1c1c1c;transform:scaleX(1.0850);transform-origin:right 50%;">101.31</div><svg class="r" style="left:1347.25px;top:691.34px;width:18.5px;height:18.5px;" viewBox="0 0 24 24"><path fill="#111" d="M12 2C6.48 2 2 6.48 2 12s4.48 10 10 10 10-4.48 10-10S17.52 2 12 2zm0 18c-4.42 0-8-3.58-8-8s3.58-8 8-8 8 3.58 8 8-3.58 8-8 8z"/></svg><div class="t" style="left:1431.50px;top:697.31px;font-size:9.3px;font-weight:700;color:#c8582e;transform:translateX(-50%) scaleX(1.0100);transform-origin:center 50%;-webkit-text-stroke:0.25px #c8582e;">PENDIENTE</div><div class="t" style="left:1524.00px;top:697.31px;font-size:9.3px;font-weight:700;color:#c8582e;transform:translateX(-50%) scaleX(1.0100);transform-origin:center 50%;-webkit-text-stroke:0.25px #c8582e;">PENDIENTE</div><svg class="r" style="left:1591.75px;top:691.34px;width:18.5px;height:18.5px;" viewBox="0 0 24 24"><path fill="#111" d="M12 2C6.48 2 2 6.48 2 12s4.48 10 10 10 10-4.48 10-10S17.52 2 12 2zm0 18c-4.42 0-8-3.58-8-8s3.58-8 8-8 8 3.58 8 8-3.58 8-8 8z"/></svg><svg class="r" style="left:1665.75px;top:691.34px;width:18.5px;height:18.5px;" viewBox="0 0 24 24"><path fill="#111" d="M12 2C6.48 2 2 6.48 2 12s4.48 10 10 10 10-4.48 10-10S17.52 2 12 2zm0 18c-4.42 0-8-3.58-8-8s3.58-8 8-8 8 3.58 8 8-3.58 8-8 8z"/></svg><svg class="r" style="left:1731.25px;top:691.34px;width:18.5px;height:18.5px;" viewBox="0 0 24 24"><path fill="#111" d="M12 2C6.48 2 2 6.48 2 12s4.48 10 10 10 10-4.48 10-10S17.52 2 12 2zm0 18c-4.42 0-8-3.58-8-8s3.58-8 8-8 8 3.58 8 8-3.58 8-8 8z"/></svg><svg class="r" style="left:1781.25px;top:691.34px;width:18.5px;height:18.5px;" viewBox="0 0 24 24"><path fill="#111" d="M12 2C6.48 2 2 6.48 2 12s4.48 10 10 10 10-4.48 10-10S17.52 2 12 2zm0 18c-4.42 0-8-3.58-8-8s3.58-8 8-8 8 3.58 8 8-3.58 8-8 8z"/></svg><svg class="r" style="left:1822.50px;top:692.09px;width:16px;height:16px;" viewBox="0 0 24 24"><path fill="#111" d="M19 9h-4V3H9v6H5l7 7 7-7zM5 18v2h14v-2H5z"/></svg><svg class="r" style="left:1856.75px;top:691.63px;width:16.5px;height:16.5px;" viewBox="0 0 24 24"><path fill="#111" d="M12 4.5C7 4.5 2.73 7.61 1 12c1.73 4.39 6 7.5 11 7.5s9.27-3.11 11-7.5c-1.73-4.39-6-7.5-11-7.5zM12 17c-2.76 0-5-2.24-5-5s2.24-5 5-5 5 2.24 5 5-2.24 5-5 5zm0-8c-1.66 0-3 1.34-3 3s1.34 3 3 3 3-1.34 3-3-1.34-3-3-3z"/></svg><svg class="r" style="left:173.50px;top:722.67px;width:15px;height:15px;" viewBox="0 0 24 24"><path fill="#111" d="M12 8c1.1 0 2-.9 2-2s-.9-2-2-2-2 .9-2 2 .9 2 2 2zm0 2c-1.1 0-2 .9-2 2s.9 2 2 2 2-.9 2-2-.9-2-2-2zm0 6c-1.1 0-2 .9-2 2s.9 2 2 2 2-.9 2-2-.9-2-2-2z"/></svg><div class="t" style="left:255.00px;top:727.60px;font-size:9.3px;font-weight:400;color:#1c1c1c;transform:translateX(-50%) scaleX(1.0850);transform-origin:center 50%;">24-03-26 09:57</div><div class="t" style="left:346.00px;top:727.60px;font-size:9.3px;font-weight:400;color:#1c1c1c;transform:translateX(-50%) scaleX(1.0850);transform-origin:center 50%;">202603</div><div class="t" style="left:439.50px;top:727.60px;font-size:9.3px;font-weight:400;color:#1c1c1c;transform:translateX(-50%) scaleX(1.0850);transform-origin:center 50%;">0001-00013228</div><div class="t" style="left:545.50px;top:727.60px;font-size:9.3px;font-weight:400;color:#1c1c1c;transform:translateX(-50%) scaleX(1.0850);transform-origin:center 50%;">23-03-26</div><div class="t" style="left:648.50px;top:727.60px;font-size:9.3px;font-weight:400;color:#1c1c1c;transform:translateX(-50%) scaleX(1.0300);transform-origin:center 50%;">J ROSAS</div><div class="t" style="left:756.00px;top:727.60px;font-size:9.3px;font-weight:400;color:#1c1c1c;transform:translateX(-50%) scaleX(1.0850);transform-origin:center 50%;">10195722795</div><div class="t" style="left:813.70px;top:727.60px;font-size:9.3px;font-weight:400;color:#1c1c1c;transform:scaleX(1.0300);transform-origin:left 50%;">LLAURY VILLANUEVA ROSA JUANA</div><div class="t" style="left:1133.50px;top:727.60px;font-size:9.3px;font-weight:400;color:#1c1c1c;transform:translateX(-50%) scaleX(1.0300);transform-origin:center 50%;">CONTADO</div><div class="t" style="left:1228.00px;top:727.60px;font-size:9.3px;font-weight:400;color:#1c1c1c;transform:translateX(-50%) scaleX(1.0300);transform-origin:center 50%;">SOLES</div><div class="t" style="right:572.50px;top:727.60px;font-size:9.3px;font-weight:400;color:#1c1c1c;transform:scaleX(1.0850);transform-origin:right 50%;">510.60</div><svg class="r" style="left:1347.25px;top:721.62px;width:18.5px;height:18.5px;background:radial-gradient(circle,#fff 0,#fff 30%,transparent 31%);border-radius:50%;" viewBox="0 0 24 24"><path fill="#1b6b35" d="M12 2C6.48 2 2 6.48 2 12s4.48 10 10 10 10-4.48 10-10S17.52 2 12 2zm-2 15l-5-5 1.41-1.41L10 14.17l7.59-7.59L19 8l-9 9z"/></svg><div class="t" style="left:1431.50px;top:727.60px;font-size:9.3px;font-weight:700;color:#c8582e;transform:translateX(-50%) scaleX(1.0100);transform-origin:center 50%;-webkit-text-stroke:0.25px #c8582e;">PENDIENTE</div><div class="t" style="left:1524.00px;top:727.60px;font-size:9.3px;font-weight:700;color:#c8582e;transform:translateX(-50%) scaleX(1.0100);transform-origin:center 50%;-webkit-text-stroke:0.25px #c8582e;">PENDIENTE</div><svg class="r" style="left:1591.75px;top:721.62px;width:18.5px;height:18.5px;" viewBox="0 0 24 24"><path fill="#111" d="M12 2C6.48 2 2 6.48 2 12s4.48 10 10 10 10-4.48 10-10S17.52 2 12 2zm0 18c-4.42 0-8-3.58-8-8s3.58-8 8-8 8 3.58 8 8-3.58 8-8 8z"/></svg><svg class="r" style="left:1665.75px;top:721.62px;width:18.5px;height:18.5px;" viewBox="0 0 24 24"><path fill="#111" d="M12 2C6.48 2 2 6.48 2 12s4.48 10 10 10 10-4.48 10-10S17.52 2 12 2zm0 18c-4.42 0-8-3.58-8-8s3.58-8 8-8 8 3.58 8 8-3.58 8-8 8z"/></svg><svg class="r" style="left:1731.25px;top:721.62px;width:18.5px;height:18.5px;" viewBox="0 0 24 24"><path fill="#111" d="M12 2C6.48 2 2 6.48 2 12s4.48 10 10 10 10-4.48 10-10S17.52 2 12 2zm0 18c-4.42 0-8-3.58-8-8s3.58-8 8-8 8 3.58 8 8-3.58 8-8 8z"/></svg><svg class="r" style="left:1781.25px;top:721.62px;width:18.5px;height:18.5px;" viewBox="0 0 24 24"><path fill="#111" d="M12 2C6.48 2 2 6.48 2 12s4.48 10 10 10 10-4.48 10-10S17.52 2 12 2zm0 18c-4.42 0-8-3.58-8-8s3.58-8 8-8 8 3.58 8 8-3.58 8-8 8z"/></svg><svg class="r" style="left:1822.50px;top:722.38px;width:16px;height:16px;" viewBox="0 0 24 24"><path fill="#111" d="M19 9h-4V3H9v6H5l7 7 7-7zM5 18v2h14v-2H5z"/></svg><svg class="r" style="left:1856.75px;top:721.92px;width:16.5px;height:16.5px;" viewBox="0 0 24 24"><path fill="#111" d="M12 4.5C7 4.5 2.73 7.61 1 12c1.73 4.39 6 7.5 11 7.5s9.27-3.11 11-7.5c-1.73-4.39-6-7.5-11-7.5zM12 17c-2.76 0-5-2.24-5-5s2.24-5 5-5 5 2.24 5 5-2.24 5-5 5zm0-8c-1.66 0-3 1.34-3 3s1.34 3 3 3 3-1.34 3-3-1.34-3-3-3z"/></svg><svg class="r" style="left:173.50px;top:752.96px;width:15px;height:15px;" viewBox="0 0 24 24"><path fill="#111" d="M12 8c1.1 0 2-.9 2-2s-.9-2-2-2-2 .9-2 2 .9 2 2 2zm0 2c-1.1 0-2 .9-2 2s.9 2 2 2 2-.9 2-2-.9-2-2-2zm0 6c-1.1 0-2 .9-2 2s.9 2 2 2 2-.9 2-2-.9-2-2-2z"/></svg><div class="t" style="left:255.00px;top:757.89px;font-size:9.3px;font-weight:400;color:#1c1c1c;transform:translateX(-50%) scaleX(1.0850);transform-origin:center 50%;">24-03-26 09:57</div><div class="t" style="left:346.00px;top:757.89px;font-size:9.3px;font-weight:400;color:#1c1c1c;transform:translateX(-50%) scaleX(1.0850);transform-origin:center 50%;">202603</div><div class="t" style="left:439.50px;top:757.89px;font-size:9.3px;font-weight:400;color:#1c1c1c;transform:translateX(-50%) scaleX(1.0850);transform-origin:center 50%;">0001-00013227</div><div class="t" style="left:545.50px;top:757.89px;font-size:9.3px;font-weight:400;color:#1c1c1c;transform:translateX(-50%) scaleX(1.0850);transform-origin:center 50%;">23-03-26</div><div class="t" style="left:648.50px;top:757.89px;font-size:9.3px;font-weight:400;color:#1c1c1c;transform:translateX(-50%) scaleX(1.0300);transform-origin:center 50%;">J ROSAS</div><div class="t" style="left:756.00px;top:757.89px;font-size:9.3px;font-weight:400;color:#1c1c1c;transform:translateX(-50%) scaleX(1.0850);transform-origin:center 50%;">20481445940</div><div class="t" style="left:813.70px;top:757.89px;font-size:9.3px;font-weight:400;color:#1c1c1c;transform:scaleX(1.0300);transform-origin:left 50%;">INVERSIONES GALVEZ S.A.C.</div><div class="t" style="left:1133.50px;top:757.89px;font-size:9.3px;font-weight:400;color:#1c1c1c;transform:translateX(-50%) scaleX(1.0400);transform-origin:center 50%;">CRÉDITO 15 DÍAS</div><div class="t" style="left:1228.00px;top:757.89px;font-size:9.3px;font-weight:400;color:#1c1c1c;transform:translateX(-50%) scaleX(1.0300);transform-origin:center 50%;">SOLES</div><div class="t" style="right:572.50px;top:757.89px;font-size:9.3px;font-weight:400;color:#1c1c1c;transform:scaleX(1.0850);transform-origin:right 50%;">2,214.03</div><svg class="r" style="left:1347.25px;top:751.91px;width:18.5px;height:18.5px;" viewBox="0 0 24 24"><path fill="#111" d="M12 2C6.48 2 2 6.48 2 12s4.48 10 10 10 10-4.48 10-10S17.52 2 12 2zm0 18c-4.42 0-8-3.58-8-8s3.58-8 8-8 8 3.58 8 8-3.58 8-8 8z"/></svg><div class="t" style="left:1431.50px;top:757.89px;font-size:9.3px;font-weight:700;color:#c8582e;transform:translateX(-50%) scaleX(1.0100);transform-origin:center 50%;-webkit-text-stroke:0.25px #c8582e;">PENDIENTE</div><div class="t" style="left:1524.00px;top:757.89px;font-size:9.3px;font-weight:700;color:#c8582e;transform:translateX(-50%) scaleX(1.0100);transform-origin:center 50%;-webkit-text-stroke:0.25px #c8582e;">PENDIENTE</div><svg class="r" style="left:1591.75px;top:751.91px;width:18.5px;height:18.5px;" viewBox="0 0 24 24"><path fill="#111" d="M12 2C6.48 2 2 6.48 2 12s4.48 10 10 10 10-4.48 10-10S17.52 2 12 2zm0 18c-4.42 0-8-3.58-8-8s3.58-8 8-8 8 3.58 8 8-3.58 8-8 8z"/></svg><svg class="r" style="left:1665.75px;top:751.91px;width:18.5px;height:18.5px;" viewBox="0 0 24 24"><path fill="#111" d="M12 2C6.48 2 2 6.48 2 12s4.48 10 10 10 10-4.48 10-10S17.52 2 12 2zm0 18c-4.42 0-8-3.58-8-8s3.58-8 8-8 8 3.58 8 8-3.58 8-8 8z"/></svg><svg class="r" style="left:1731.25px;top:751.91px;width:18.5px;height:18.5px;" viewBox="0 0 24 24"><path fill="#111" d="M12 2C6.48 2 2 6.48 2 12s4.48 10 10 10 10-4.48 10-10S17.52 2 12 2zm0 18c-4.42 0-8-3.58-8-8s3.58-8 8-8 8 3.58 8 8-3.58 8-8 8z"/></svg><svg class="r" style="left:1781.25px;top:751.91px;width:18.5px;height:18.5px;" viewBox="0 0 24 24"><path fill="#111" d="M12 2C6.48 2 2 6.48 2 12s4.48 10 10 10 10-4.48 10-10S17.52 2 12 2zm0 18c-4.42 0-8-3.58-8-8s3.58-8 8-8 8 3.58 8 8-3.58 8-8 8z"/></svg><svg class="r" style="left:1822.50px;top:752.66px;width:16px;height:16px;" viewBox="0 0 24 24"><path fill="#111" d="M19 9h-4V3H9v6H5l7 7 7-7zM5 18v2h14v-2H5z"/></svg><svg class="r" style="left:1856.75px;top:752.21px;width:16.5px;height:16.5px;" viewBox="0 0 24 24"><path fill="#111" d="M12 4.5C7 4.5 2.73 7.61 1 12c1.73 4.39 6 7.5 11 7.5s9.27-3.11 11-7.5c-1.73-4.39-6-7.5-11-7.5zM12 17c-2.76 0-5-2.24-5-5s2.24-5 5-5 5 2.24 5 5-2.24 5-5 5zm0-8c-1.66 0-3 1.34-3 3s1.34 3 3 3 3-1.34 3-3-1.34-3-3-3z"/></svg><svg class="r" style="left:173.50px;top:783.25px;width:15px;height:15px;" viewBox="0 0 24 24"><path fill="#111" d="M12 8c1.1 0 2-.9 2-2s-.9-2-2-2-2 .9-2 2 .9 2 2 2zm0 2c-1.1 0-2 .9-2 2s.9 2 2 2 2-.9 2-2-.9-2-2-2zm0 6c-1.1 0-2 .9-2 2s.9 2 2 2 2-.9 2-2-.9-2-2-2z"/></svg><div class="t" style="left:255.00px;top:788.18px;font-size:9.3px;font-weight:400;color:#1c1c1c;transform:translateX(-50%) scaleX(1.0850);transform-origin:center 50%;">24-03-26 09:56</div><div class="t" style="left:346.00px;top:788.18px;font-size:9.3px;font-weight:400;color:#1c1c1c;transform:translateX(-50%) scaleX(1.0850);transform-origin:center 50%;">202603</div><div class="t" style="left:439.50px;top:788.18px;font-size:9.3px;font-weight:400;color:#1c1c1c;transform:translateX(-50%) scaleX(1.0850);transform-origin:center 50%;">0001-00013226</div><div class="t" style="left:545.50px;top:788.18px;font-size:9.3px;font-weight:400;color:#1c1c1c;transform:translateX(-50%) scaleX(1.0850);transform-origin:center 50%;">23-03-26</div><div class="t" style="left:648.50px;top:788.18px;font-size:9.3px;font-weight:400;color:#1c1c1c;transform:translateX(-50%) scaleX(1.0300);transform-origin:center 50%;">J ROSAS</div><div class="t" style="left:756.00px;top:788.18px;font-size:9.3px;font-weight:400;color:#1c1c1c;transform:translateX(-50%) scaleX(1.0850);transform-origin:center 50%;">20481445940</div><div class="t" style="left:813.70px;top:788.18px;font-size:9.3px;font-weight:400;color:#1c1c1c;transform:scaleX(1.0300);transform-origin:left 50%;">INVERSIONES GALVEZ S.A.C.</div><div class="t" style="left:1133.50px;top:788.18px;font-size:9.3px;font-weight:400;color:#1c1c1c;transform:translateX(-50%) scaleX(1.0400);transform-origin:center 50%;">CRÉDITO 15 DÍAS</div><div class="t" style="left:1228.00px;top:788.18px;font-size:9.3px;font-weight:400;color:#1c1c1c;transform:translateX(-50%) scaleX(1.0300);transform-origin:center 50%;">SOLES</div><div class="t" style="right:572.50px;top:788.18px;font-size:9.3px;font-weight:400;color:#1c1c1c;transform:scaleX(1.0850);transform-origin:right 50%;">108.02</div><svg class="r" style="left:1347.25px;top:782.20px;width:18.5px;height:18.5px;" viewBox="0 0 24 24"><path fill="#111" d="M12 2C6.48 2 2 6.48 2 12s4.48 10 10 10 10-4.48 10-10S17.52 2 12 2zm0 18c-4.42 0-8-3.58-8-8s3.58-8 8-8 8 3.58 8 8-3.58 8-8 8z"/></svg><div class="t" style="left:1431.50px;top:788.18px;font-size:9.3px;font-weight:700;color:#c8582e;transform:translateX(-50%) scaleX(1.0100);transform-origin:center 50%;-webkit-text-stroke:0.25px #c8582e;">PENDIENTE</div><div class="t" style="left:1524.00px;top:788.18px;font-size:9.3px;font-weight:700;color:#c8582e;transform:translateX(-50%) scaleX(1.0100);transform-origin:center 50%;-webkit-text-stroke:0.25px #c8582e;">PENDIENTE</div><svg class="r" style="left:1591.75px;top:782.20px;width:18.5px;height:18.5px;" viewBox="0 0 24 24"><path fill="#111" d="M12 2C6.48 2 2 6.48 2 12s4.48 10 10 10 10-4.48 10-10S17.52 2 12 2zm0 18c-4.42 0-8-3.58-8-8s3.58-8 8-8 8 3.58 8 8-3.58 8-8 8z"/></svg><svg class="r" style="left:1665.75px;top:782.20px;width:18.5px;height:18.5px;" viewBox="0 0 24 24"><path fill="#111" d="M12 2C6.48 2 2 6.48 2 12s4.48 10 10 10 10-4.48 10-10S17.52 2 12 2zm0 18c-4.42 0-8-3.58-8-8s3.58-8 8-8 8 3.58 8 8-3.58 8-8 8z"/></svg><svg class="r" style="left:1731.25px;top:782.20px;width:18.5px;height:18.5px;" viewBox="0 0 24 24"><path fill="#111" d="M12 2C6.48 2 2 6.48 2 12s4.48 10 10 10 10-4.48 10-10S17.52 2 12 2zm0 18c-4.42 0-8-3.58-8-8s3.58-8 8-8 8 3.58 8 8-3.58 8-8 8z"/></svg><svg class="r" style="left:1781.25px;top:782.20px;width:18.5px;height:18.5px;" viewBox="0 0 24 24"><path fill="#111" d="M12 2C6.48 2 2 6.48 2 12s4.48 10 10 10 10-4.48 10-10S17.52 2 12 2zm0 18c-4.42 0-8-3.58-8-8s3.58-8 8-8 8 3.58 8 8-3.58 8-8 8z"/></svg><svg class="r" style="left:1822.50px;top:782.95px;width:16px;height:16px;" viewBox="0 0 24 24"><path fill="#111" d="M19 9h-4V3H9v6H5l7 7 7-7zM5 18v2h14v-2H5z"/></svg><svg class="r" style="left:1856.75px;top:782.50px;width:16.5px;height:16.5px;" viewBox="0 0 24 24"><path fill="#111" d="M12 4.5C7 4.5 2.73 7.61 1 12c1.73 4.39 6 7.5 11 7.5s9.27-3.11 11-7.5c-1.73-4.39-6-7.5-11-7.5zM12 17c-2.76 0-5-2.24-5-5s2.24-5 5-5 5 2.24 5 5-2.24 5-5 5zm0-8c-1.66 0-3 1.34-3 3s1.34 3 3 3 3-1.34 3-3-1.34-3-3-3z"/></svg><svg class="r" style="left:173.50px;top:813.54px;width:15px;height:15px;" viewBox="0 0 24 24"><path fill="#111" d="M12 8c1.1 0 2-.9 2-2s-.9-2-2-2-2 .9-2 2 .9 2 2 2zm0 2c-1.1 0-2 .9-2 2s.9 2 2 2 2-.9 2-2-.9-2-2-2zm0 6c-1.1 0-2 .9-2 2s.9 2 2 2 2-.9 2-2-.9-2-2-2z"/></svg><div class="t" style="left:255.00px;top:818.47px;font-size:9.3px;font-weight:400;color:#1c1c1c;transform:translateX(-50%) scaleX(1.0850);transform-origin:center 50%;">24-03-26 09:51</div><div class="t" style="left:346.00px;top:818.47px;font-size:9.3px;font-weight:400;color:#1c1c1c;transform:translateX(-50%) scaleX(1.0850);transform-origin:center 50%;">202603</div><div class="t" style="left:439.50px;top:818.47px;font-size:9.3px;font-weight:400;color:#1c1c1c;transform:translateX(-50%) scaleX(1.0850);transform-origin:center 50%;">0001-00013225</div><div class="t" style="left:545.50px;top:818.47px;font-size:9.3px;font-weight:400;color:#1c1c1c;transform:translateX(-50%) scaleX(1.0850);transform-origin:center 50%;">23-03-26</div><div class="t" style="left:648.50px;top:818.47px;font-size:9.3px;font-weight:400;color:#1c1c1c;transform:translateX(-50%) scaleX(1.0300);transform-origin:center 50%;">J ROSAS</div><div class="t" style="left:756.00px;top:818.47px;font-size:9.3px;font-weight:400;color:#1c1c1c;transform:translateX(-50%) scaleX(1.0850);transform-origin:center 50%;">20481445940</div><div class="t" style="left:813.70px;top:818.47px;font-size:9.3px;font-weight:400;color:#1c1c1c;transform:scaleX(1.0300);transform-origin:left 50%;">INVERSIONES GALVEZ S.A.C.</div><div class="t" style="left:1133.50px;top:818.47px;font-size:9.3px;font-weight:400;color:#1c1c1c;transform:translateX(-50%) scaleX(1.0400);transform-origin:center 50%;">CRÉDITO 15 DÍAS</div><div class="t" style="left:1228.00px;top:818.47px;font-size:9.3px;font-weight:400;color:#1c1c1c;transform:translateX(-50%) scaleX(1.0300);transform-origin:center 50%;">SOLES</div><div class="t" style="right:572.50px;top:818.47px;font-size:9.3px;font-weight:400;color:#1c1c1c;transform:scaleX(1.0850);transform-origin:right 50%;">946.11</div><svg class="r" style="left:1347.25px;top:812.49px;width:18.5px;height:18.5px;" viewBox="0 0 24 24"><path fill="#111" d="M12 2C6.48 2 2 6.48 2 12s4.48 10 10 10 10-4.48 10-10S17.52 2 12 2zm0 18c-4.42 0-8-3.58-8-8s3.58-8 8-8 8 3.58 8 8-3.58 8-8 8z"/></svg><div class="t" style="left:1431.50px;top:818.47px;font-size:9.3px;font-weight:700;color:#c8582e;transform:translateX(-50%) scaleX(1.0100);transform-origin:center 50%;-webkit-text-stroke:0.25px #c8582e;">PENDIENTE</div><div class="t" style="left:1524.00px;top:818.47px;font-size:9.3px;font-weight:700;color:#c8582e;transform:translateX(-50%) scaleX(1.0100);transform-origin:center 50%;-webkit-text-stroke:0.25px #c8582e;">PENDIENTE</div><svg class="r" style="left:1591.75px;top:812.49px;width:18.5px;height:18.5px;" viewBox="0 0 24 24"><path fill="#111" d="M12 2C6.48 2 2 6.48 2 12s4.48 10 10 10 10-4.48 10-10S17.52 2 12 2zm0 18c-4.42 0-8-3.58-8-8s3.58-8 8-8 8 3.58 8 8-3.58 8-8 8z"/></svg><svg class="r" style="left:1665.75px;top:812.49px;width:18.5px;height:18.5px;" viewBox="0 0 24 24"><path fill="#111" d="M12 2C6.48 2 2 6.48 2 12s4.48 10 10 10 10-4.48 10-10S17.52 2 12 2zm0 18c-4.42 0-8-3.58-8-8s3.58-8 8-8 8 3.58 8 8-3.58 8-8 8z"/></svg><svg class="r" style="left:1731.25px;top:812.49px;width:18.5px;height:18.5px;" viewBox="0 0 24 24"><path fill="#111" d="M12 2C6.48 2 2 6.48 2 12s4.48 10 10 10 10-4.48 10-10S17.52 2 12 2zm0 18c-4.42 0-8-3.58-8-8s3.58-8 8-8 8 3.58 8 8-3.58 8-8 8z"/></svg><svg class="r" style="left:1781.25px;top:812.49px;width:18.5px;height:18.5px;" viewBox="0 0 24 24"><path fill="#111" d="M12 2C6.48 2 2 6.48 2 12s4.48 10 10 10 10-4.48 10-10S17.52 2 12 2zm0 18c-4.42 0-8-3.58-8-8s3.58-8 8-8 8 3.58 8 8-3.58 8-8 8z"/></svg><svg class="r" style="left:1822.50px;top:813.24px;width:16px;height:16px;" viewBox="0 0 24 24"><path fill="#111" d="M19 9h-4V3H9v6H5l7 7 7-7zM5 18v2h14v-2H5z"/></svg><svg class="r" style="left:1856.75px;top:812.79px;width:16.5px;height:16.5px;" viewBox="0 0 24 24"><path fill="#111" d="M12 4.5C7 4.5 2.73 7.61 1 12c1.73 4.39 6 7.5 11 7.5s9.27-3.11 11-7.5c-1.73-4.39-6-7.5-11-7.5zM12 17c-2.76 0-5-2.24-5-5s2.24-5 5-5 5 2.24 5 5-2.24 5-5 5zm0-8c-1.66 0-3 1.34-3 3s1.34 3 3 3 3-1.34 3-3-1.34-3-3-3z"/></svg><svg class="r" style="left:173.50px;top:843.83px;width:15px;height:15px;" viewBox="0 0 24 24"><path fill="#111" d="M12 8c1.1 0 2-.9 2-2s-.9-2-2-2-2 .9-2 2 .9 2 2 2zm0 2c-1.1 0-2 .9-2 2s.9 2 2 2 2-.9 2-2-.9-2-2-2zm0 6c-1.1 0-2 .9-2 2s.9 2 2 2 2-.9 2-2-.9-2-2-2z"/></svg><div class="t" style="left:255.00px;top:848.76px;font-size:9.3px;font-weight:400;color:#1c1c1c;transform:translateX(-50%) scaleX(1.0850);transform-origin:center 50%;">24-03-26 09:50</div><div class="t" style="left:346.00px;top:848.76px;font-size:9.3px;font-weight:400;color:#1c1c1c;transform:translateX(-50%) scaleX(1.0850);transform-origin:center 50%;">202603</div><div class="t" style="left:439.50px;top:848.76px;font-size:9.3px;font-weight:400;color:#1c1c1c;transform:translateX(-50%) scaleX(1.0850);transform-origin:center 50%;">0001-00013224</div><div class="t" style="left:545.50px;top:848.76px;font-size:9.3px;font-weight:400;color:#1c1c1c;transform:translateX(-50%) scaleX(1.0850);transform-origin:center 50%;">21-03-26</div><div class="t" style="left:648.50px;top:848.76px;font-size:9.3px;font-weight:400;color:#1c1c1c;transform:translateX(-50%) scaleX(1.0300);transform-origin:center 50%;">J ROSAS</div><div class="t" style="left:756.00px;top:848.76px;font-size:9.3px;font-weight:400;color:#1c1c1c;transform:translateX(-50%) scaleX(1.0850);transform-origin:center 50%;">20481445940</div><div class="t" style="left:813.70px;top:848.76px;font-size:9.3px;font-weight:400;color:#1c1c1c;transform:scaleX(1.0300);transform-origin:left 50%;">INVERSIONES GALVEZ S.A.C.</div><div class="t" style="left:1133.50px;top:848.76px;font-size:9.3px;font-weight:400;color:#1c1c1c;transform:translateX(-50%) scaleX(1.0400);transform-origin:center 50%;">CRÉDITO 15 DÍAS</div><div class="t" style="left:1228.00px;top:848.76px;font-size:9.3px;font-weight:400;color:#1c1c1c;transform:translateX(-50%) scaleX(1.0300);transform-origin:center 50%;">SOLES</div><div class="t" style="right:572.50px;top:848.76px;font-size:9.3px;font-weight:400;color:#1c1c1c;transform:scaleX(1.0850);transform-origin:right 50%;">190.03</div><svg class="r" style="left:1347.25px;top:842.78px;width:18.5px;height:18.5px;" viewBox="0 0 24 24"><path fill="#111" d="M12 2C6.48 2 2 6.48 2 12s4.48 10 10 10 10-4.48 10-10S17.52 2 12 2zm0 18c-4.42 0-8-3.58-8-8s3.58-8 8-8 8 3.58 8 8-3.58 8-8 8z"/></svg><div class="t" style="left:1431.50px;top:848.76px;font-size:9.3px;font-weight:700;color:#c8582e;transform:translateX(-50%) scaleX(1.0100);transform-origin:center 50%;-webkit-text-stroke:0.25px #c8582e;">PENDIENTE</div><div class="t" style="left:1524.00px;top:848.76px;font-size:9.3px;font-weight:700;color:#c8582e;transform:translateX(-50%) scaleX(1.0100);transform-origin:center 50%;-webkit-text-stroke:0.25px #c8582e;">PENDIENTE</div><svg class="r" style="left:1591.75px;top:842.78px;width:18.5px;height:18.5px;" viewBox="0 0 24 24"><path fill="#111" d="M12 2C6.48 2 2 6.48 2 12s4.48 10 10 10 10-4.48 10-10S17.52 2 12 2zm0 18c-4.42 0-8-3.58-8-8s3.58-8 8-8 8 3.58 8 8-3.58 8-8 8z"/></svg><svg class="r" style="left:1665.75px;top:842.78px;width:18.5px;height:18.5px;" viewBox="0 0 24 24"><path fill="#111" d="M12 2C6.48 2 2 6.48 2 12s4.48 10 10 10 10-4.48 10-10S17.52 2 12 2zm0 18c-4.42 0-8-3.58-8-8s3.58-8 8-8 8 3.58 8 8-3.58 8-8 8z"/></svg><svg class="r" style="left:1731.25px;top:842.78px;width:18.5px;height:18.5px;" viewBox="0 0 24 24"><path fill="#111" d="M12 2C6.48 2 2 6.48 2 12s4.48 10 10 10 10-4.48 10-10S17.52 2 12 2zm0 18c-4.42 0-8-3.58-8-8s3.58-8 8-8 8 3.58 8 8-3.58 8-8 8z"/></svg><svg class="r" style="left:1781.25px;top:842.78px;width:18.5px;height:18.5px;" viewBox="0 0 24 24"><path fill="#111" d="M12 2C6.48 2 2 6.48 2 12s4.48 10 10 10 10-4.48 10-10S17.52 2 12 2zm0 18c-4.42 0-8-3.58-8-8s3.58-8 8-8 8 3.58 8 8-3.58 8-8 8z"/></svg><svg class="r" style="left:1822.50px;top:843.53px;width:16px;height:16px;" viewBox="0 0 24 24"><path fill="#111" d="M19 9h-4V3H9v6H5l7 7 7-7zM5 18v2h14v-2H5z"/></svg><svg class="r" style="left:1856.75px;top:843.08px;width:16.5px;height:16.5px;" viewBox="0 0 24 24"><path fill="#111" d="M12 4.5C7 4.5 2.73 7.61 1 12c1.73 4.39 6 7.5 11 7.5s9.27-3.11 11-7.5c-1.73-4.39-6-7.5-11-7.5zM12 17c-2.76 0-5-2.24-5-5s2.24-5 5-5 5 2.24 5 5-2.24 5-5 5zm0-8c-1.66 0-3 1.34-3 3s1.34 3 3 3 3-1.34 3-3-1.34-3-3-3z"/></svg><svg class="r" style="left:173.50px;top:874.12px;width:15px;height:15px;" viewBox="0 0 24 24"><path fill="#111" d="M12 8c1.1 0 2-.9 2-2s-.9-2-2-2-2 .9-2 2 .9 2 2 2zm0 2c-1.1 0-2 .9-2 2s.9 2 2 2 2-.9 2-2-.9-2-2-2zm0 6c-1.1 0-2 .9-2 2s.9 2 2 2 2-.9 2-2-.9-2-2-2z"/></svg><div class="t" style="left:255.00px;top:879.05px;font-size:9.3px;font-weight:400;color:#1c1c1c;transform:translateX(-50%) scaleX(1.0850);transform-origin:center 50%;">24-03-26 09:49</div><div class="t" style="left:346.00px;top:879.05px;font-size:9.3px;font-weight:400;color:#1c1c1c;transform:translateX(-50%) scaleX(1.0850);transform-origin:center 50%;">202603</div><div class="t" style="left:439.50px;top:879.05px;font-size:9.3px;font-weight:400;color:#1c1c1c;transform:translateX(-50%) scaleX(1.0850);transform-origin:center 50%;">0001-00013223</div><div class="t" style="left:545.50px;top:879.05px;font-size:9.3px;font-weight:400;color:#1c1c1c;transform:translateX(-50%) scaleX(1.0850);transform-origin:center 50%;">24-03-26</div><div class="t" style="left:648.50px;top:879.05px;font-size:9.3px;font-weight:400;color:#1c1c1c;transform:translateX(-50%) scaleX(1.0300);transform-origin:center 50%;">M VERA</div><div class="t" style="left:756.00px;top:879.05px;font-size:9.3px;font-weight:400;color:#1c1c1c;transform:translateX(-50%) scaleX(1.0850);transform-origin:center 50%;">20112273922</div><div class="t" style="left:813.70px;top:879.05px;font-size:9.3px;font-weight:400;color:#1c1c1c;transform:scaleX(1.0300);transform-origin:left 50%;">TIENDAS DEL MEJORAMIENTO DEL HOGAR S.A.</div><div class="t" style="left:1133.50px;top:879.05px;font-size:9.3px;font-weight:400;color:#1c1c1c;transform:translateX(-50%) scaleX(1.0300);transform-origin:center 50%;">CONTADO</div><div class="t" style="left:1228.00px;top:879.05px;font-size:9.3px;font-weight:400;color:#1c1c1c;transform:translateX(-50%) scaleX(1.0300);transform-origin:center 50%;">SOLES</div><div class="t" style="right:572.50px;top:879.05px;font-size:9.3px;font-weight:400;color:#1c1c1c;transform:scaleX(1.0850);transform-origin:right 50%;">2,277.00</div><svg class="r" style="left:1347.25px;top:873.08px;width:18.5px;height:18.5px;" viewBox="0 0 24 24"><path fill="#111" d="M12 2C6.48 2 2 6.48 2 12s4.48 10 10 10 10-4.48 10-10S17.52 2 12 2zm0 18c-4.42 0-8-3.58-8-8s3.58-8 8-8 8 3.58 8 8-3.58 8-8 8z"/></svg><div class="t" style="left:1431.50px;top:879.05px;font-size:9.3px;font-weight:700;color:#17609a;transform:translateX(-50%) scaleX(1.0100);transform-origin:center 50%;-webkit-text-stroke:0.25px #17609a;">APROBADO</div><div class="t" style="left:1524.00px;top:879.05px;font-size:9.3px;font-weight:700;color:#c8582e;transform:translateX(-50%) scaleX(1.0100);transform-origin:center 50%;-webkit-text-stroke:0.25px #c8582e;">PENDIENTE</div><svg class="r" style="left:1591.75px;top:873.08px;width:18.5px;height:18.5px;" viewBox="0 0 24 24"><path fill="#111" d="M12 2C6.48 2 2 6.48 2 12s4.48 10 10 10 10-4.48 10-10S17.52 2 12 2zm0 18c-4.42 0-8-3.58-8-8s3.58-8 8-8 8 3.58 8 8-3.58 8-8 8z"/></svg><svg class="r" style="left:1665.75px;top:873.08px;width:18.5px;height:18.5px;" viewBox="0 0 24 24"><path fill="#111" d="M12 2C6.48 2 2 6.48 2 12s4.48 10 10 10 10-4.48 10-10S17.52 2 12 2zm0 18c-4.42 0-8-3.58-8-8s3.58-8 8-8 8 3.58 8 8-3.58 8-8 8z"/></svg><svg class="r" style="left:1731.25px;top:873.08px;width:18.5px;height:18.5px;" viewBox="0 0 24 24"><path fill="#111" d="M12 2C6.48 2 2 6.48 2 12s4.48 10 10 10 10-4.48 10-10S17.52 2 12 2zm0 18c-4.42 0-8-3.58-8-8s3.58-8 8-8 8 3.58 8 8-3.58 8-8 8z"/></svg><svg class="r" style="left:1781.25px;top:873.08px;width:18.5px;height:18.5px;" viewBox="0 0 24 24"><path fill="#111" d="M12 2C6.48 2 2 6.48 2 12s4.48 10 10 10 10-4.48 10-10S17.52 2 12 2zm0 18c-4.42 0-8-3.58-8-8s3.58-8 8-8 8 3.58 8 8-3.58 8-8 8z"/></svg><svg class="r" style="left:1822.50px;top:873.83px;width:16px;height:16px;" viewBox="0 0 24 24"><path fill="#111" d="M19 9h-4V3H9v6H5l7 7 7-7zM5 18v2h14v-2H5z"/></svg><svg class="r" style="left:1856.75px;top:873.38px;width:16.5px;height:16.5px;" viewBox="0 0 24 24"><path fill="#111" d="M12 4.5C7 4.5 2.73 7.61 1 12c1.73 4.39 6 7.5 11 7.5s9.27-3.11 11-7.5c-1.73-4.39-6-7.5-11-7.5zM12 17c-2.76 0-5-2.24-5-5s2.24-5 5-5 5 2.24 5 5-2.24 5-5 5zm0-8c-1.66 0-3 1.34-3 3s1.34 3 3 3 3-1.34 3-3-1.34-3-3-3z"/></svg><svg class="r" style="left:173.50px;top:904.41px;width:15px;height:15px;" viewBox="0 0 24 24"><path fill="#111" d="M12 8c1.1 0 2-.9 2-2s-.9-2-2-2-2 .9-2 2 .9 2 2 2zm0 2c-1.1 0-2 .9-2 2s.9 2 2 2 2-.9 2-2-.9-2-2-2zm0 6c-1.1 0-2 .9-2 2s.9 2 2 2 2-.9 2-2-.9-2-2-2z"/></svg><div class="t" style="left:255.00px;top:909.34px;font-size:9.3px;font-weight:400;color:#1c1c1c;transform:translateX(-50%) scaleX(1.0850);transform-origin:center 50%;">24-03-26 09:45</div><div class="t" style="left:346.00px;top:909.34px;font-size:9.3px;font-weight:400;color:#1c1c1c;transform:translateX(-50%) scaleX(1.0850);transform-origin:center 50%;">202603</div><div class="t" style="left:439.50px;top:909.34px;font-size:9.3px;font-weight:400;color:#1c1c1c;transform:translateX(-50%) scaleX(1.0850);transform-origin:center 50%;">0001-00013222</div><div class="t" style="left:545.50px;top:909.34px;font-size:9.3px;font-weight:400;color:#1c1c1c;transform:translateX(-50%) scaleX(1.0850);transform-origin:center 50%;">24-03-26</div><div class="t" style="left:648.50px;top:909.34px;font-size:9.3px;font-weight:400;color:#1c1c1c;transform:translateX(-50%) scaleX(1.0300);transform-origin:center 50%;">J ROSAS</div><div class="t" style="left:756.00px;top:909.34px;font-size:9.3px;font-weight:400;color:#1c1c1c;transform:translateX(-50%) scaleX(1.0850);transform-origin:center 50%;">20481445940</div><div class="t" style="left:813.70px;top:909.34px;font-size:9.3px;font-weight:400;color:#1c1c1c;transform:scaleX(1.0300);transform-origin:left 50%;">INVERSIONES GALVEZ S.A.C.</div><div class="t" style="left:1133.50px;top:909.34px;font-size:9.3px;font-weight:400;color:#1c1c1c;transform:translateX(-50%) scaleX(1.0400);transform-origin:center 50%;">CRÉDITO 15 DÍAS</div><div class="t" style="left:1228.00px;top:909.34px;font-size:9.3px;font-weight:400;color:#1c1c1c;transform:translateX(-50%) scaleX(1.0300);transform-origin:center 50%;">SOLES</div><div class="t" style="right:572.50px;top:909.34px;font-size:9.3px;font-weight:400;color:#1c1c1c;transform:scaleX(1.0850);transform-origin:right 50%;">1,000.00</div><svg class="r" style="left:1347.25px;top:903.37px;width:18.5px;height:18.5px;" viewBox="0 0 24 24"><path fill="#111" d="M12 2C6.48 2 2 6.48 2 12s4.48 10 10 10 10-4.48 10-10S17.52 2 12 2zm0 18c-4.42 0-8-3.58-8-8s3.58-8 8-8 8 3.58 8 8-3.58 8-8 8z"/></svg><div class="t" style="left:1431.50px;top:909.34px;font-size:9.3px;font-weight:700;color:#c8582e;transform:translateX(-50%) scaleX(1.0100);transform-origin:center 50%;-webkit-text-stroke:0.25px #c8582e;">PENDIENTE</div><div class="t" style="left:1524.00px;top:909.34px;font-size:9.3px;font-weight:700;color:#c8582e;transform:translateX(-50%) scaleX(1.0100);transform-origin:center 50%;-webkit-text-stroke:0.25px #c8582e;">PENDIENTE</div><svg class="r" style="left:1591.75px;top:903.37px;width:18.5px;height:18.5px;" viewBox="0 0 24 24"><path fill="#111" d="M12 2C6.48 2 2 6.48 2 12s4.48 10 10 10 10-4.48 10-10S17.52 2 12 2zm0 18c-4.42 0-8-3.58-8-8s3.58-8 8-8 8 3.58 8 8-3.58 8-8 8z"/></svg><svg class="r" style="left:1665.75px;top:903.37px;width:18.5px;height:18.5px;" viewBox="0 0 24 24"><path fill="#111" d="M12 2C6.48 2 2 6.48 2 12s4.48 10 10 10 10-4.48 10-10S17.52 2 12 2zm0 18c-4.42 0-8-3.58-8-8s3.58-8 8-8 8 3.58 8 8-3.58 8-8 8z"/></svg><svg class="r" style="left:1731.25px;top:903.37px;width:18.5px;height:18.5px;" viewBox="0 0 24 24"><path fill="#111" d="M12 2C6.48 2 2 6.48 2 12s4.48 10 10 10 10-4.48 10-10S17.52 2 12 2zm0 18c-4.42 0-8-3.58-8-8s3.58-8 8-8 8 3.58 8 8-3.58 8-8 8z"/></svg><svg class="r" style="left:1781.25px;top:903.37px;width:18.5px;height:18.5px;" viewBox="0 0 24 24"><path fill="#111" d="M12 2C6.48 2 2 6.48 2 12s4.48 10 10 10 10-4.48 10-10S17.52 2 12 2zm0 18c-4.42 0-8-3.58-8-8s3.58-8 8-8 8 3.58 8 8-3.58 8-8 8z"/></svg><svg class="r" style="left:1822.50px;top:904.12px;width:16px;height:16px;" viewBox="0 0 24 24"><path fill="#111" d="M19 9h-4V3H9v6H5l7 7 7-7zM5 18v2h14v-2H5z"/></svg><svg class="r" style="left:1856.75px;top:903.66px;width:16.5px;height:16.5px;" viewBox="0 0 24 24"><path fill="#111" d="M12 4.5C7 4.5 2.73 7.61 1 12c1.73 4.39 6 7.5 11 7.5s9.27-3.11 11-7.5c-1.73-4.39-6-7.5-11-7.5zM12 17c-2.76 0-5-2.24-5-5s2.24-5 5-5 5 2.24 5 5-2.24 5-5 5zm0-8c-1.66 0-3 1.34-3 3s1.34 3 3 3 3-1.34 3-3-1.34-3-3-3z"/></svg><div class="r" style="left:142px;top:909px;width:1759px;height:3px;background:#b1b1b1;"></div><div class="r" style="left:41px;top:11px;width:1824px;height:497px;background:#fff;border-radius:4px;box-shadow:0 11px 15px -7px rgba(0,0,0,.2),0 24px 38px 3px rgba(0,0,0,.1),0 9px 46px 8px rgba(0,0,0,.08);"></div><div class="t" style="left:54.37px;top:24.83px;font-size:14.5px;font-weight:700;color:#212529;transform:scaleX(0.9285);transform-origin:left 50%;">ORDEN DE COMPRA</div><svg class="r" style="left:1828.25px;top:20.75px;width:22.5px;height:22.5px;" viewBox="0 0 24 24"><path fill="#212529" d="M12 2C6.47 2 2 6.47 2 12s4.47 10 10 10 10-4.47 10-10S17.53 2 12 2zm5 13.59L15.59 17 12 13.41 8.41 17 7 15.59 10.59 12 7 8.41 8.41 7 12 10.59 15.59 7 17 8.41 13.41 12 17 15.59z"/></svg><div class="r" style="left:51px;top:47px;width:1803px;height:1px;background:#e3e3e3;"></div><div class="r" style="left:51px;top:95px;width:1803px;height:1px;background:#e3e3e3;"></div><div class="r" style="left:55.5px;top:59.2px;width:99.0px;height:32.2px;border:1px solid #e0e0e0;border-radius:4px;box-sizing:border-box;background:#fff"></div><svg class="r" style="left:66.00px;top:66.90px;width:15.8px;height:15.8px;" viewBox="0 0 24 24"><path fill="#9e9e9e" d="M23 12l-2.44-2.79.34-3.69-3.61-.82-1.89-3.2L12 2.96 8.6 1.5 6.71 4.69 3.1 5.5l.34 3.7L1 12l2.44 2.79-.34 3.7 3.61.82L8.6 22.5l3.4-1.47 3.4 1.46 1.89-3.19 3.61-.82-.34-3.69L23 12zm-12.91 4.72l-3.8-3.81 1.48-1.48 2.32 2.33 5.85-5.87 1.48 1.48-7.33 7.35z"/></svg><div class="t" style="left:89.90px;top:69.57px;font-size:10.2px;font-weight:400;color:#9e9e9e;letter-spacing:1.8px;transform:scaleX(0.8283);transform-origin:left 50%;-webkit-text-stroke:0.4px #9e9e9e;">APROBAR</div><div class="r" style="left:158.6px;top:59.2px;width:106.0px;height:32.2px;border:1px solid #e0e0e0;border-radius:4px;box-sizing:border-box;background:#fff"></div><svg class="r" style="left:170.00px;top:66.80px;width:16px;height:16px" viewBox="0 0 16 16"><g stroke="#9e9e9e" stroke-width="1.85" stroke-linecap="round"><line x1="2.9" y1="4.9" x2="2.9" y2="10"/><line x1="5.4" y1="3.0" x2="5.4" y2="10"/><line x1="7.85" y1="1.5" x2="7.85" y2="10"/><line x1="10.3" y1="3.2" x2="10.3" y2="10"/><line x1="12.55" y1="7.0" x2="12.55" y2="11"/></g><path fill="#9e9e9e" d="M2 9.2 L13.5 9.2 L13.5 11.2 C13.5 14.3 11 16.4 7.75 16.4 C4.5 16.4 2 14.3 2 11.2 Z"/><path stroke="#fff" stroke-width="0.8" fill="none" d="M9.2 13.2 L11.3 11.1"/></svg><div class="t" style="left:192.26px;top:69.57px;font-size:10.2px;font-weight:400;color:#9e9e9e;letter-spacing:1.8px;transform:scaleX(0.8418);transform-origin:left 50%;-webkit-text-stroke:0.4px #9e9e9e;">RECHAZAR</div><div class="r" style="left:269.7px;top:59.2px;width:90.9px;height:32.2px;border:1px solid #e0e0e0;border-radius:4px;box-sizing:border-box;background:#fff"></div><svg class="r" style="left:279.50px;top:66.90px;width:15.8px;height:15.8px;" viewBox="0 0 24 24"><path fill="#9e9e9e" d="M12 2C6.48 2 2 6.48 2 12s4.48 10 10 10 10-4.48 10-10S17.52 2 12 2zM4 12c0-4.42 3.58-8 8-8 1.85 0 3.55.63 4.9 1.69L5.69 16.9C4.63 15.55 4 13.85 4 12zm8 8c-1.85 0-3.55-.63-4.9-1.69L18.31 7.1C19.37 8.45 20 10.15 20 12c0 4.42-3.58 8-8 8z"/></svg><div class="t" style="left:302.90px;top:69.57px;font-size:10.2px;font-weight:400;color:#9e9e9e;letter-spacing:1.8px;transform:scaleX(0.8520);transform-origin:left 50%;-webkit-text-stroke:0.4px #9e9e9e;">ANULAR</div><div class="r" style="left:365.4px;top:59.2px;width:68.2px;height:32.2px;border:1px solid #e0e0e0;border-radius:4px;box-sizing:border-box;background:#e8eaf6"></div><svg class="r" style="left:375.40px;top:66.90px;width:15.8px;height:15.8px;" viewBox="0 0 24 24"><path fill="#3f51b5" d="M12 4.5C7 4.5 2.73 7.61 1 12c1.73 4.39 6 7.5 11 7.5s9.27-3.11 11-7.5c-1.73-4.39-6-7.5-11-7.5zM12 17c-2.76 0-5-2.24-5-5s2.24-5 5-5 5 2.24 5 5-2.24 5-5 5zm0-8c-1.66 0-3 1.34-3 3s1.34 3 3 3 3-1.34 3-3-1.34-3-3-3z"/></svg><div class="t" style="left:397.92px;top:69.57px;font-size:10.2px;font-weight:400;color:#3f51b5;letter-spacing:1.8px;transform:scaleX(0.8783);transform-origin:left 50%;-webkit-text-stroke:0.4px #3f51b5;">PDF</div><div class="r" style="left:438.6px;top:59.2px;width:67.8px;height:32.2px;border:1px solid #e0e0e0;border-radius:4px;box-sizing:border-box;background:#fff"></div><svg class="r" style="left:448.70px;top:66.90px;width:15.8px;height:15.8px;" viewBox="0 0 24 24"><path fill="#3f51b5" d="M19 9h-4V3H9v6H5l7 7 7-7zM5 18v2h14v-2H5z"/></svg><div class="t" style="left:471.23px;top:69.57px;font-size:10.2px;font-weight:400;color:#3f51b5;letter-spacing:1.8px;transform:scaleX(0.8652);transform-origin:left 50%;-webkit-text-stroke:0.4px #3f51b5;">PDF</div><div class="r" style="left:511.5px;top:59.2px;width:69.1px;height:32.2px;border:1px solid #e0e0e0;border-radius:4px;box-sizing:border-box;background:#fff"></div><svg class="r" style="left:523.40px;top:67.80px;width:13px;height:14px" viewBox="0 0 13 14"><path fill="#c5cae9" d="M3 1 H11.6 V12.8 H3 Z"/><path fill="none" stroke="#3f51b5" stroke-width="1.35" d="M2.9 10 V0.9 H12 V13.2"/><path fill="#3f51b5" d="M4.5 3.4 H9.4 V4.3 H4.5 Z M10.2 3.4 H11 V4.3 H10.2 Z M4.5 5.3 H9.4 V6.2 H4.5 Z M10.2 5.3 H11 V6.2 H10.2 Z"/><path fill="#3f51b5" d="M1.2 9.5 H9.2 V13.5 H1.2 C0.5 13.5 0.1 13 0.1 12.4 V10.6 C0.1 10 0.5 9.5 1.2 9.5 Z M9.2 12.5 H12.6 V13.5 H9.2 Z"/></svg><div class="t" style="left:544.75px;top:69.57px;font-size:10.2px;font-weight:400;color:#3f51b5;letter-spacing:1.8px;transform:scaleX(0.8458);transform-origin:left 50%;-webkit-text-stroke:0.4px #3f51b5;">LOG</div><div class="r" style="left:585.4px;top:59.2px;width:123.1px;height:32.2px;border:1px solid #e0e0e0;border-radius:4px;box-sizing:border-box;background:#fff"></div><svg class="r" style="left:595.10px;top:66.90px;width:15.8px;height:15.8px;" viewBox="0 0 24 24"><path fill="#3f51b5" d="M16 1H4c-1.1 0-2 .9-2 2v14h2V3h12V1zm3 4H8c-1.1 0-2 .9-2 2v14c0 1.1.9 2 2 2h11c1.1 0 2-.9 2-2V7c0-1.1-.9-2-2-2zm0 16H8V7h11v14z"/></svg><div class="t" style="left:618.19px;top:69.57px;font-size:10.2px;font-weight:400;color:#3f51b5;letter-spacing:1.8px;transform:scaleX(0.8076);transform-origin:left 50%;-webkit-text-stroke:0.4px #3f51b5;">GENERAR GRP</div><div class="r" style="left:712.6px;top:59.2px;width:102.9px;height:32.2px;border:1px solid #e0e0e0;border-radius:4px;box-sizing:border-box;background:#fff"></div><svg class="r" style="left:723.50px;top:66.90px;width:15.8px;height:15.8px;" viewBox="0 0 24 24"><path fill="#9e9e9e" d="M18 8h-1V6c0-2.76-2.24-5-5-5S7 3.24 7 6v2H6c-1.1 0-2 .9-2 2v10c0 1.1.9 2 2 2h12c1.1 0 2-.9 2-2V10c0-1.1-.9-2-2-2zm-6 9c-1.1 0-2-.9-2-2s.9-2 2-2 2 .9 2 2-.9 2-2 2zm3.1-9H8.9V6c0-1.71 1.39-3.1 3.1-3.1 1.71 0 3.1 1.39 3.1 3.1v2z"/></svg><div class="t" style="left:746.57px;top:69.57px;font-size:10.2px;font-weight:400;color:#9e9e9e;letter-spacing:1.8px;transform:scaleX(0.8266);transform-origin:left 50%;-webkit-text-stroke:0.4px #9e9e9e;">CONCLUIR</div><div class="r" style="left:819.5px;top:59.2px;width:147.0px;height:32.2px;border:1px solid #e0e0e0;border-radius:4px;box-sizing:border-box;background:#fff"></div><svg class="r" style="left:830.40px;top:66.90px;width:15.8px;height:15.8px;" viewBox="0 0 24 24"><path fill="#212121" d="M17.66 9.53l-7.07 7.07-4.24-4.24 1.41-1.41 2.83 2.83 5.66-5.66 1.41 1.41zM4 12c0-2.33 1.02-4.42 2.62-5.88L9 8.5v-6H3l2.2 2.2C3.24 6.52 2 9.11 2 12c0 5.19 3.95 9.45 9 9.95v-2.02c-3.94-.49-7-3.86-7-7.93zm18 0c0-5.19-3.95-9.45-9-9.95v2.02c3.94.49 7 3.86 7 7.93 0 2.33-1.02 4.42-2.62 5.88L15 15.5v6h6l-2.2-2.2c1.96-1.82 3.2-4.41 3.2-7.3z"/></svg><div class="t" style="left:853.90px;top:69.57px;font-size:10.2px;font-weight:400;color:#212121;letter-spacing:1.8px;transform:scaleX(0.8117);transform-origin:left 50%;-webkit-text-stroke:0.4px #212121;">VERIFICAR ATENC.</div><div class="r" style="left:970.5px;top:59.2px;width:102.3px;height:32.2px;border:1px solid #e0e0e0;border-radius:4px;box-sizing:border-box;background:#fff"></div><div class="t" style="left:983.95px;top:69.57px;font-size:10.2px;font-weight:400;color:#3f51b5;letter-spacing:1.8px;transform:scaleX(0.8488);transform-origin:left 50%;-webkit-text-stroke:0.65px #3f51b5;">SINCRONIZAR</div><div class="t" style="left:1708.45px;top:67.36px;font-size:16px;font-weight:700;color:#212529;transform:scaleX(1.0519);transform-origin:left 50%;">N° 0001-00013238</div><div class="r" style="left:55.5px;top:107px;width:1794.5px;height:89.5px;border:1px solid #e3e3e3;border-radius:5px;box-sizing:border-box;"></div><div class="t" style="left:69.50px;top:112.91px;font-size:10.5px;font-weight:700;color:#212121;transform:scaleX(1.0048);transform-origin:left 50%;">RUC</div><div class="t" style="left:178.98px;top:112.91px;font-size:10.5px;font-weight:400;color:#333;letter-spacing:0.3px;transform:scaleX(1.0222);transform-origin:left 50%;">: 20510673710</div><div class="t" style="left:69.52px;top:129.91px;font-size:10.5px;font-weight:700;color:#212121;transform:scaleX(0.9797);transform-origin:left 50%;">RAZÓN SOCIAL</div><div class="t" style="left:179.05px;top:129.91px;font-size:10.5px;font-weight:400;color:#333;letter-spacing:0.3px;transform:scaleX(0.9477);transform-origin:left 50%;">: IMPLEMENTOS PERU S.A.C.</div><div class="t" style="left:69.51px;top:145.71px;font-size:10.5px;font-weight:700;color:#212121;transform:scaleX(0.9857);transform-origin:left 50%;">FORMA PAGO</div><div class="t" style="left:179.04px;top:145.71px;font-size:10.5px;font-weight:400;color:#333;letter-spacing:0.3px;transform:scaleX(0.9621);transform-origin:left 50%;">: CONTADO</div><div class="t" style="left:69.52px;top:161.91px;font-size:10.5px;font-weight:700;color:#212121;transform:scaleX(0.9849);transform-origin:left 50%;">DEPARTAMENTO</div><div class="t" style="left:179.07px;top:161.91px;font-size:10.5px;font-weight:400;color:#333;letter-spacing:0.3px;transform:scaleX(0.9297);transform-origin:left 50%;">: LOGÍSTICA</div><div class="t" style="left:70.50px;top:177.71px;font-size:10.5px;font-weight:700;color:#212121;transform:scaleX(1.0083);transform-origin:left 50%;">TIPO</div><div class="t" style="left:179.03px;top:177.71px;font-size:10.5px;font-weight:400;color:#333;letter-spacing:0.3px;transform:scaleX(0.9729);transform-origin:left 50%;">: MATERIAL</div><div class="t" style="left:369.20px;top:161.91px;font-size:10.5px;font-weight:700;color:#212121;transform:scaleX(0.9541);transform-origin:left 50%;">ANEXO</div><div class="t" style="left:476.12px;top:161.91px;font-size:10.5px;font-weight:400;color:#333;transform:scaleX(0.9849);transform-origin:left 50%;">: ASISTENTE DE LOGÍSTICA</div><div class="t" style="left:368.23px;top:177.71px;font-size:10.5px;font-weight:700;color:#212121;transform:scaleX(0.9663);transform-origin:left 50%;">REGULARICACIÓN</div><div class="t" style="left:476.08px;top:177.71px;font-size:10.5px;font-weight:400;color:#333;transform:scaleX(1.0250);transform-origin:left 50%;">: NO</div><div class="t" style="left:868.33px;top:161.91px;font-size:10.5px;font-weight:700;color:#212121;transform:scaleX(0.9702);transform-origin:left 50%;">USUARIO</div><div class="t" style="left:963.69px;top:161.91px;font-size:10.5px;font-weight:400;color:#333;transform:scaleX(1.0067);transform-origin:left 50%;">: M VERA</div><div class="t" style="left:869.30px;top:177.71px;font-size:10.5px;font-weight:700;color:#212121;transform:scaleX(0.9741);transform-origin:left 50%;">SINCRONIZADO</div><div class="t" style="left:963.70px;top:177.71px;font-size:10.5px;font-weight:400;color:#333;">:</div><div class="r" style="left:970.1px;top:175.7px;width:13.8px;height:13.8px;border:1.2px solid #222;border-radius:50%;box-sizing:border-box"></div><div class="t" style="left:1115.00px;top:161.91px;font-size:10.5px;font-weight:700;color:#212121;transform:scaleX(0.9718);transform-origin:left 50%;">APROBACIÓN</div><div class="t" style="left:1198.73px;top:161.91px;font-size:10.5px;font-weight:700;color:#1b72b8;transform:scaleX(0.9712);transform-origin:left 50%;">: APROBADO</div><div class="t" style="left:1399.30px;top:161.91px;font-size:10.5px;font-weight:700;color:#212121;transform:scaleX(1.0038);transform-origin:left 50%;">ATENCIÓN</div><div class="t" style="left:1466.80px;top:161.91px;font-size:10.5px;font-weight:700;color:#eb6a2e;transform:scaleX(1.0046);transform-origin:left 50%;">: PENDIENTE</div><div class="t" style="left:1668.51px;top:112.91px;font-size:10.5px;font-weight:700;color:#212121;transform:scaleX(0.9921);transform-origin:left 50%;">FECHA DOC.</div><div class="t" style="left:1777.34px;top:112.91px;font-size:10.5px;font-weight:400;color:#333;transform:scaleX(1.0638);transform-origin:left 50%;">: 23-03-2026</div><div class="t" style="left:1668.50px;top:129.91px;font-size:10.5px;font-weight:700;color:#212121;transform:scaleX(1.0044);transform-origin:left 50%;">MONEDA</div><div class="t" style="left:1777.41px;top:129.91px;font-size:10.5px;font-weight:400;color:#333;transform:scaleX(0.9897);transform-origin:left 50%;">: SOLES</div><div class="t" style="left:1669.50px;top:145.71px;font-size:10.5px;font-weight:700;color:#212121;transform:scaleX(1.0389);transform-origin:left 50%;">T.C.</div><div class="t" style="left:1777.33px;top:145.71px;font-size:10.5px;font-weight:400;color:#333;transform:scaleX(1.0677);transform-origin:left 50%;">: 3.477</div><div class="t" style="left:83.00px;top:215.69px;font-size:11px;font-weight:400;color:#3f51b5;letter-spacing:1.6px;transform:scaleX(0.9018);transform-origin:left 50%;-webkit-text-stroke:0.45px #3f51b5;">DETALLE</div><div class="r" style="left:135.9px;top:209.9px;width:14px;height:14px;border-radius:50%;background:#3949ab;"></div><div class="t" style="left:142.90px;top:212.98px;font-size:9px;font-weight:700;color:#fff;transform:translateX(-50%);transform-origin:center 50%;">1</div><div class="t" style="left:186.45px;top:215.69px;font-size:11px;font-weight:400;color:#616161;letter-spacing:1.6px;transform:scaleX(0.9476);transform-origin:left 50%;-webkit-text-stroke:0.45px #616161;">R/C</div><div class="r" style="left:208.8px;top:209.9px;width:14px;height:14px;border-radius:50%;background:#3949ab;"></div><div class="t" style="left:215.80px;top:212.98px;font-size:9px;font-weight:700;color:#fff;transform:translateX(-50%);transform-origin:center 50%;">1</div><div class="t" style="left:262.12px;top:215.69px;font-size:11px;font-weight:400;color:#bdbdbd;letter-spacing:1.6px;transform:scaleX(0.8829);transform-origin:left 50%;-webkit-text-stroke:0.45px #bdbdbd;">GRCP</div><div class="r" style="left:295.3px;top:209.9px;width:14px;height:14px;border-radius:50%;background:#aeb4e0;"></div><div class="t" style="left:302.30px;top:212.98px;font-size:9px;font-weight:700;color:#fff;transform:translateX(-50%);transform-origin:center 50%;">0</div><div class="t" style="left:340.10px;top:215.69px;font-size:11px;font-weight:400;color:#bdbdbd;letter-spacing:1.6px;transform:scaleX(0.9015);transform-origin:left 50%;-webkit-text-stroke:0.45px #bdbdbd;">FACTURAS</div><div class="r" style="left:403.0px;top:209.9px;width:14px;height:14px;border-radius:50%;background:#aeb4e0;"></div><div class="t" style="left:410.00px;top:212.98px;font-size:9px;font-weight:700;color:#fff;transform:translateX(-50%);transform-origin:center 50%;">0</div><div class="t" style="left:446.50px;top:215.69px;font-size:11px;font-weight:400;color:#bdbdbd;letter-spacing:1.6px;transform:scaleX(0.8830);transform-origin:left 50%;-webkit-text-stroke:0.45px #bdbdbd;">ANEXOS</div><div class="r" style="left:495.0px;top:209.9px;width:14px;height:14px;border-radius:50%;background:#aeb4e0;"></div><div class="t" style="left:502.00px;top:212.98px;font-size:9px;font-weight:700;color:#fff;transform:translateX(-50%);transform-origin:center 50%;">0</div><div class="t" style="left:538.00px;top:215.69px;font-size:11px;font-weight:400;color:#bdbdbd;letter-spacing:1.6px;transform:scaleX(0.8719);transform-origin:left 50%;-webkit-text-stroke:0.45px #bdbdbd;">VOUCHER</div><div class="r" style="left:595.0px;top:209.9px;width:14px;height:14px;border-radius:50%;background:#aeb4e0;"></div><div class="t" style="left:602.00px;top:212.98px;font-size:9px;font-weight:700;color:#fff;transform:translateX(-50%);transform-origin:center 50%;">0</div><div class="r" style="left:62px;top:242.3px;width:95px;height:1.6999999999999886px;background:#3949ab;"></div><div class="r" style="left:62px;top:244.5px;width:1781px;height:104.0px;background:#f2f3f5;border:1px solid #dcdcdc;box-sizing:border-box;"></div><div class="r" style="left:63px;top:294.5px;width:1779px;height:31.5px;background:#fff;"></div><div class="r" style="left:62px;top:269px;width:1780px;height:1px;background:#dcdcdc;"></div><div class="r" style="left:62px;top:294px;width:1780px;height:1px;background:#dcdcdc;"></div><div class="r" style="left:62px;top:326px;width:1780px;height:1px;background:#dcdcdc;"></div><div class="r" style="left:98.3px;top:269px;width:1px;height:57px;background:#dcdcdc"></div><div class="r" style="left:134.2px;top:269px;width:1px;height:57px;background:#dcdcdc"></div><div class="r" style="left:184.4px;top:269px;width:1px;height:57px;background:#dcdcdc"></div><div class="r" style="left:271.4px;top:269px;width:1px;height:57px;background:#dcdcdc"></div><div class="r" style="left:658.4px;top:269px;width:1px;height:57px;background:#dcdcdc"></div><div class="r" style="left:813.4px;top:269px;width:1px;height:57px;background:#dcdcdc"></div><div class="r" style="left:918.4px;top:269px;width:1px;height:57px;background:#dcdcdc"></div><div class="r" style="left:1012.4px;top:269px;width:1px;height:57px;background:#dcdcdc"></div><div class="r" style="left:1094.4px;top:269px;width:1px;height:57px;background:#dcdcdc"></div><div class="r" style="left:1242.4px;top:269px;width:1px;height:57px;background:#dcdcdc"></div><div class="r" style="left:1343.3px;top:269px;width:1px;height:57px;background:#dcdcdc"></div><div class="r" style="left:1410.6px;top:245px;width:1px;height:81px;background:#dcdcdc"></div><div class="r" style="left:1482.5px;top:269px;width:1px;height:57px;background:#dcdcdc"></div><div class="r" style="left:1554.4px;top:245px;width:1px;height:81px;background:#dcdcdc"></div><div class="r" style="left:1626.4px;top:269px;width:1px;height:57px;background:#dcdcdc"></div><div class="r" style="left:1698.3px;top:269px;width:1px;height:57px;background:#dcdcdc"></div><div class="r" style="left:1770.5px;top:269px;width:1px;height:57px;background:#dcdcdc"></div><div class="t" style="left:720.44px;top:253.48px;font-size:9px;font-weight:700;color:#3f454d;letter-spacing:0.5px;transform:scaleX(0.9613);transform-origin:left 50%;">DATOS</div><div class="t" style="left:1458.90px;top:253.48px;font-size:9px;font-weight:700;color:#3f454d;letter-spacing:0.5px;transform:scaleX(0.9360);transform-origin:left 50%;">CANTIDAD</div><div class="t" style="left:1676.74px;top:253.48px;font-size:9px;font-weight:700;color:#3f454d;letter-spacing:0.5px;transform:scaleX(0.9558);transform-origin:left 50%;">IMPORTE</div><div class="t" style="left:68.51px;top:277.68px;font-size:9px;font-weight:700;color:#3f454d;letter-spacing:0.5px;transform:scaleX(0.9864);transform-origin:left 50%;">ITEM</div><div class="t" style="left:109.60px;top:277.68px;font-size:9px;font-weight:700;color:#3f454d;letter-spacing:0.5px;transform:scaleX(0.9000);transform-origin:left 50%;">RQ</div><div class="t" style="left:140.84px;top:277.68px;font-size:9px;font-weight:700;color:#3f454d;letter-spacing:0.5px;transform:scaleX(0.9622);transform-origin:left 50%;">MOTIVO</div><div class="t" style="left:210.90px;top:277.68px;font-size:9px;font-weight:700;color:#3f454d;letter-spacing:0.5px;transform:scaleX(0.8846);transform-origin:left 50%;">CÓDIGO</div><div class="t" style="left:432.86px;top:277.68px;font-size:9px;font-weight:700;color:#3f454d;letter-spacing:0.5px;transform:scaleX(0.9379);transform-origin:left 50%;">DESCRIPCIÓN</div><div class="t" style="left:703.20px;top:277.68px;font-size:9px;font-weight:700;color:#3f454d;letter-spacing:0.5px;transform:scaleX(0.9085);transform-origin:left 50%;">OBSERVACIÓN</div><div class="t" style="left:843.90px;top:277.68px;font-size:9px;font-weight:700;color:#3f454d;letter-spacing:0.5px;transform:scaleX(0.8958);transform-origin:left 50%;">CÓD. REP.</div><div class="t" style="left:945.18px;top:277.68px;font-size:9px;font-weight:700;color:#3f454d;letter-spacing:0.5px;transform:scaleX(0.9244);transform-origin:left 50%;">MODELO</div><div class="t" style="left:1035.63px;top:277.68px;font-size:9px;font-weight:700;color:#3f454d;letter-spacing:0.5px;transform:scaleX(0.9735);transform-origin:left 50%;">MARCA</div><div class="t" style="left:1137.40px;top:277.68px;font-size:9px;font-weight:700;color:#3f454d;letter-spacing:0.5px;transform:scaleX(0.9254);transform-origin:left 50%;">CONSUMIDOR</div><div class="t" style="left:1282.60px;top:277.68px;font-size:9px;font-weight:700;color:#3f454d;letter-spacing:0.5px;transform:scaleX(0.9500);transform-origin:left 50%;">TIPO</div><div class="t" style="left:1365.55px;top:277.68px;font-size:9px;font-weight:700;color:#3f454d;letter-spacing:0.5px;transform:scaleX(1.0474);transform-origin:left 50%;">U.M.</div><div class="t" style="left:1418.06px;top:277.68px;font-size:9px;font-weight:700;color:#3f454d;letter-spacing:0.5px;transform:scaleX(0.9431);transform-origin:left 50%;">SOLICITADO</div><div class="t" style="left:1491.55px;top:277.68px;font-size:9px;font-weight:700;color:#3f454d;letter-spacing:0.5px;transform:scaleX(0.9537);transform-origin:left 50%;">PENDIENTE</div><div class="t" style="left:1581.07px;top:277.68px;font-size:9px;font-weight:700;color:#3f454d;letter-spacing:0.5px;transform:scaleX(1.0250);transform-origin:left 50%;">P.U.</div><div class="t" style="left:1635.86px;top:277.68px;font-size:9px;font-weight:700;color:#3f454d;letter-spacing:0.5px;transform:scaleX(0.9444);transform-origin:left 50%;">SUB-TOTAL</div><div class="t" style="left:1709.73px;top:277.68px;font-size:9px;font-weight:700;color:#3f454d;letter-spacing:0.5px;transform:scaleX(0.9653);transform-origin:left 50%;">IMPUESTO</div><div class="t" style="left:1792.30px;top:277.68px;font-size:9px;font-weight:700;color:#3f454d;letter-spacing:0.5px;transform:scaleX(0.9194);transform-origin:left 50%;">TOTAL</div><div class="t" style="left:78.00px;top:305.06px;font-size:9.5px;font-weight:400;color:#212121;transform:scaleX(0.9000);transform-origin:left 50%;">1</div><svg class="r" style="left:107.40px;top:297.90px;width:18px;height:18px;" viewBox="0 0 24 24"><path fill="#2a7bbf" d="M16.59 7.58L10 14.17l-3.59-3.58L5 12l5 5 8-8zM12 2C6.48 2 2 6.48 2 12s4.48 10 10 10 10-4.48 10-10S17.52 2 12 2zm0 18c-4.42 0-8-3.58-8-8s3.58-8 8-8 8 3.58 8 8-3.58 8-8 8z"/></svg><div class="t" style="left:149.72px;top:305.06px;font-size:9.5px;font-weight:700;color:#1e7bc0;transform:scaleX(0.9778);transform-origin:left 50%;">STK</div><div class="t" style="left:198.00px;top:305.06px;font-size:9.5px;font-weight:400;color:#212121;letter-spacing:0.5px;transform:scaleX(0.8955);transform-origin:left 50%;">xYGnDBGwX8</div><div class="t" style="left:276.40px;top:305.66px;font-size:9.5px;font-weight:400;color:#212121;letter-spacing:0.4px;transform:scaleX(0.8955);transform-origin:left 50%;">TACO PVC PARA VEHICULO PESADO</div><div class="t" style="left:1153.02px;top:305.06px;font-size:9.5px;font-weight:400;color:#212121;letter-spacing:0.4px;transform:scaleX(0.9767);transform-origin:left 50%;">LIVIAS</div><div class="t" style="left:1275.29px;top:305.06px;font-size:9.5px;font-weight:400;color:#212121;letter-spacing:0.4px;transform:scaleX(0.9108);transform-origin:left 50%;">PROPIO</div><div class="t" style="left:1366.47px;top:305.06px;font-size:9.5px;font-weight:400;color:#212121;letter-spacing:0.4px;transform:scaleX(0.9350);transform-origin:left 50%;">UND</div><div class="t" style="left:1458.00px;top:305.06px;font-size:9.5px;font-weight:700;color:#111;transform:scaleX(1.0500);transform-origin:left 50%;">2.00</div><div class="t" style="left:1529.90px;top:305.06px;font-size:9.5px;font-weight:700;color:#f26b2a;transform:scaleX(1.0556);transform-origin:left 50%;">2.00</div><div class="t" style="left:1590.80px;top:305.06px;font-size:9.5px;font-weight:700;color:#111;transform:scaleX(1.0414);transform-origin:left 50%;">67.712</div><div class="t" style="left:1656.94px;top:305.06px;font-size:9.5px;font-weight:400;color:#212121;transform:scaleX(1.0606);transform-origin:left 50%;">135.424</div><div class="t" style="left:1734.12px;top:305.06px;font-size:9.5px;font-weight:400;color:#212121;transform:scaleX(1.0750);transform-origin:left 50%;">24.376</div><div class="t" style="left:1806.24px;top:305.06px;font-size:9.5px;font-weight:400;color:#212121;transform:scaleX(1.0643);transform-origin:left 50%;">159.80</div><div class="t" style="left:1332.50px;top:330.91px;font-size:10.5px;font-weight:700;color:#3a3f45;transform:scaleX(0.9837);transform-origin:left 50%;">AFECTO :</div><div class="t" style="left:1387.74px;top:330.91px;font-size:10.5px;font-weight:400;color:#555;transform:scaleX(1.1558);transform-origin:left 50%;">S/ 135.42</div><div class="t" style="left:1456.67px;top:330.91px;font-size:10.5px;font-weight:700;color:#3a3f45;transform:scaleX(1.0276);transform-origin:left 50%;">INAFECTO :</div><div class="t" style="left:1524.26px;top:330.91px;font-size:10.5px;font-weight:400;color:#555;transform:scaleX(1.1375);transform-origin:left 50%;">S/ 0.00</div><div class="t" style="left:1580.46px;top:330.91px;font-size:10.5px;font-weight:700;color:#3a3f45;transform:scaleX(1.0442);transform-origin:left 50%;">IMPUESTO 18 % :</div><div class="t" style="left:1677.86px;top:330.91px;font-size:10.5px;font-weight:400;color:#555;transform:scaleX(1.1421);transform-origin:left 50%;">S/ 24.38</div><div class="t" style="left:1742.30px;top:330.91px;font-size:10.5px;font-weight:700;color:#3a3f45;transform:scaleX(1.0205);transform-origin:left 50%;">TOTAL :</div><div class="t" style="left:1789.90px;top:330.91px;font-size:10.5px;font-weight:700;color:#1e7bc0;transform:scaleX(1.1432);transform-origin:left 50%;">S/ 159.80</div><div class="t" style="left:66.00px;top:361.11px;font-size:10.5px;font-weight:700;color:#111;transform:scaleX(0.9950);transform-origin:left 50%;">OBSERVACIÓN:</div><div class="t" style="left:65.04px;top:373.11px;font-size:10.5px;font-weight:400;color:#222;letter-spacing:0.45px;transform:scaleX(0.9587);transform-origin:left 50%;">COMPRA URGENTE PARA MUESTRA DE FABRICACION DE PORTA TACOS SOLICITA JOEL GALINDOS</div><div class="r" style="left:41px;top:407px;width:1824px;height:1px;background:#e3e3e3;"></div><div class="t" style="left:48.80px;top:420.51px;font-size:10.5px;font-weight:700;color:#1a72b8;transform:scaleX(0.8871);transform-origin:left 50%;">APROBACIONES</div><div class="t" style="left:50.46px;top:440.54px;font-size:10px;font-weight:700;color:#222;transform:scaleX(0.9356);transform-origin:left 50%;">USUARIO</div><div class="t" style="left:125.24px;top:440.54px;font-size:10px;font-weight:700;color:#222;transform:scaleX(0.9576);transform-origin:left 50%;">FECHA</div><div class="t" style="left:198.16px;top:440.54px;font-size:10px;font-weight:700;color:#222;transform:scaleX(0.9375);transform-origin:left 50%;">ESTADO</div><div class="t" style="left:274.21px;top:440.54px;font-size:10px;font-weight:700;color:#222;transform:scaleX(0.9929);transform-origin:left 50%;">NIVEL</div><div class="t" style="left:51.67px;top:459.64px;font-size:10px;font-weight:400;color:#333;letter-spacing:0.35px;transform:scaleX(0.9279);transform-origin:left 50%;">N LIVICY</div><div class="t" style="left:101.03px;top:459.64px;font-size:10px;font-weight:400;color:#333;letter-spacing:0.35px;transform:scaleX(0.9675);transform-origin:left 50%;">2026-03-24 15:34</div><div class="t" style="left:192.00px;top:459.64px;font-size:10px;font-weight:400;color:#2a7fc4;letter-spacing:0.35px;transform:scaleX(0.8847);transform-origin:left 50%;">APROBADO</div><div class="t" style="left:253.20px;top:459.64px;font-size:10px;font-weight:400;color:#333;letter-spacing:0.35px;transform:scaleX(0.8987);transform-origin:left 50%;">POR JEFATURA</div><div class="r" style="left:48px;top:482px;width:1809px;height:17.600000000000023px;background:#f2f3f5;"></div><div class="t" style="left:47.12px;top:486.08px;font-size:9px;font-weight:400;color:#444;letter-spacing:0.3px;transform:scaleX(0.9750);transform-origin:left 50%;">ID: 13508</div><div class="t" style="left:105.07px;top:486.08px;font-size:9px;font-weight:400;color:#444;letter-spacing:0.3px;transform:scaleX(0.9341);transform-origin:left 50%;">FECHA DE REGISTRO: 2026-03-24 15:32</div><div class="t" style="left:291.07px;top:486.08px;font-size:9px;font-weight:400;color:#444;letter-spacing:0.3px;transform:scaleX(0.9327);transform-origin:left 50%;">NEWID SAC</div><div class="r" style="left:1786px;top:416px;width:71px;height:32.2px;background:#fff;border-radius:4px;box-shadow:0 3px 1px -2px rgba(0,0,0,.2),0 2px 2px 0 rgba(0,0,0,.14),0 1px 5px 0 rgba(0,0,0,.12);"></div><div class="t" style="left:1799.65px;top:426.64px;font-size:10px;font-weight:400;color:#333;letter-spacing:1.6px;transform:scaleX(0.8531);transform-origin:left 50%;-webkit-text-stroke:0.3px #333;">CERRAR</div>
</body></html>
